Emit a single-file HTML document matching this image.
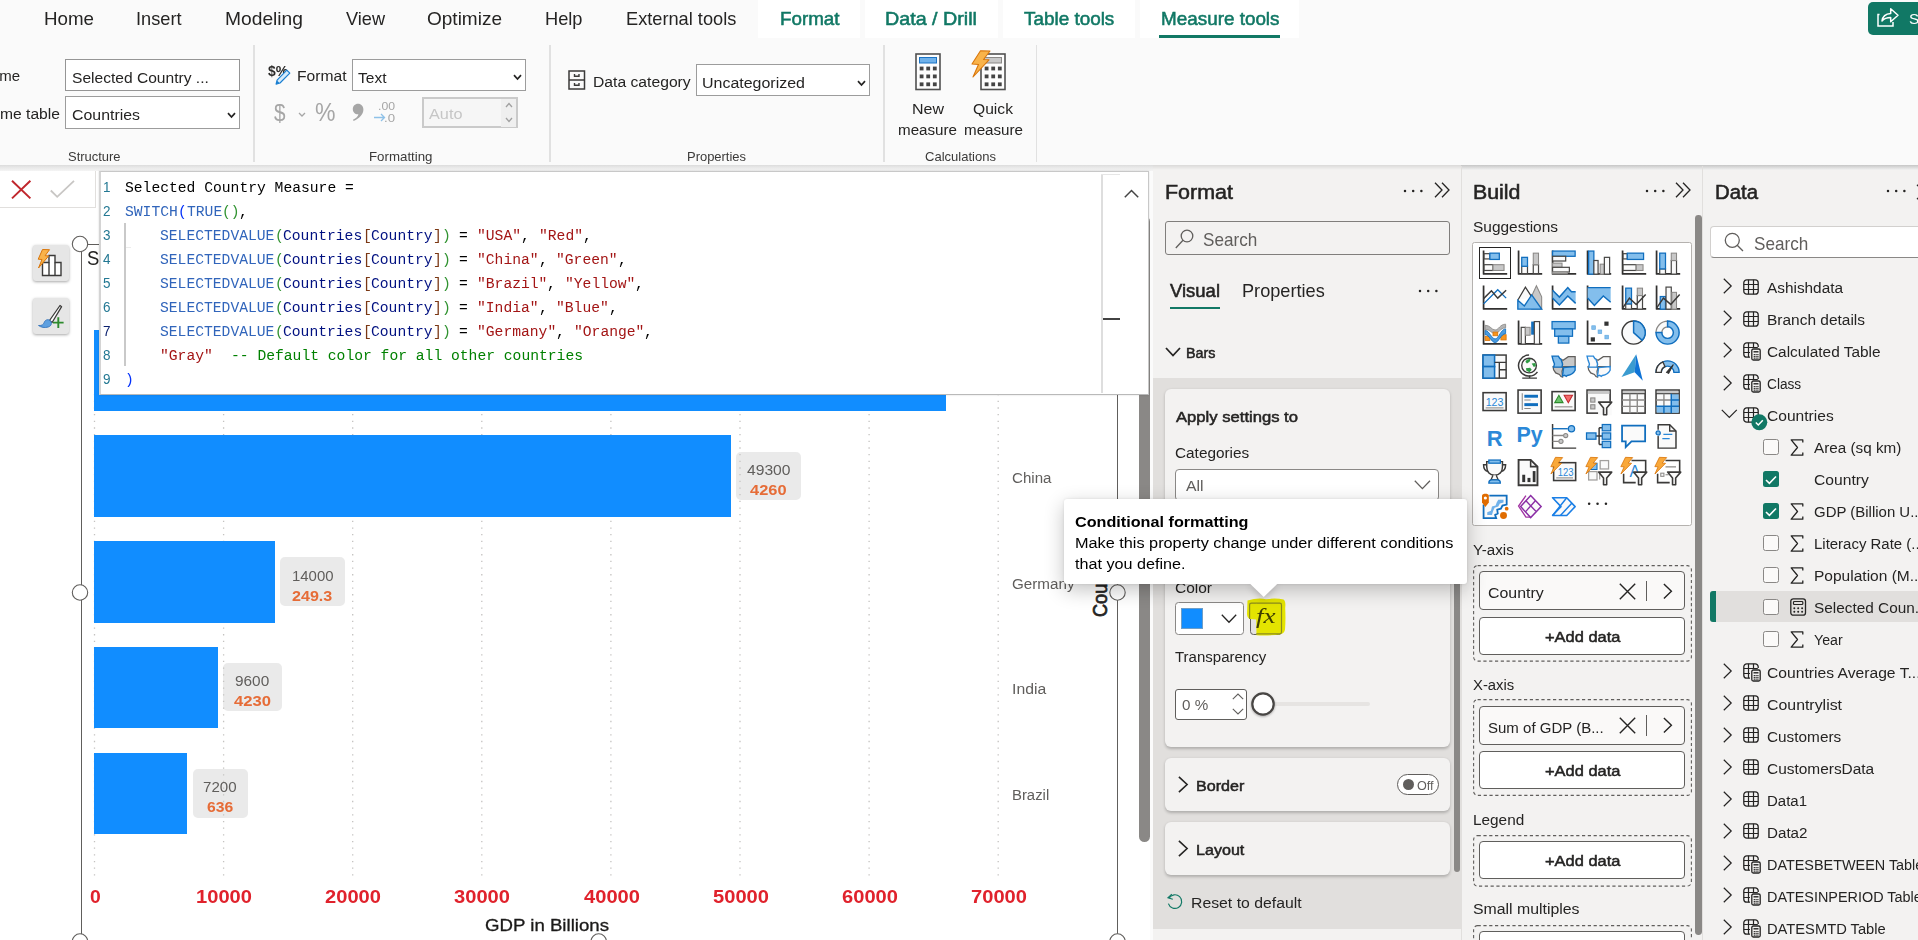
<!DOCTYPE html>
<html lang="en">
<head>
<meta charset="utf-8">
<title>Power BI Desktop - Conditional formatting</title>
<style>
html,body{margin:0;padding:0;}
body{width:1918px;height:940px;overflow:hidden;position:relative;background:#fff;
font-family:"Liberation Sans",sans-serif;color:#252423;}
#app{position:absolute;left:0;top:0;width:1918px;height:940px;overflow:hidden;}
#app section{position:absolute;left:0;top:0;width:0;height:0;}
#app div,#app svg,#app span{position:absolute;box-sizing:border-box;}
#app svg{overflow:visible;}
.t{white-space:pre;transform-origin:0 0;}
</style>
</head>
<body>
<div id="app">

<section id="ribbon" aria-label="Ribbon - Measure tools">
<div style="left:0px;top:0px;width:1918px;height:165px;background:#fafafa;"></div>
<div style="left:757.5px;top:0px;width:102px;height:37.5px;background:#ffffff;"></div>
<div style="left:865px;top:0px;width:132.5px;height:37.5px;background:#ffffff;"></div>
<div style="left:1003px;top:0px;width:131.5px;height:37.5px;background:#ffffff;"></div>
<div style="left:1139.5px;top:0px;width:159px;height:37.5px;background:#ffffff;"></div>
<span class="t" style="left:44px;top:8px;font-size:18.5px;line-height:21px;color:#252423;transform:scaleX(1.0130);">Home</span>
<span class="t" style="left:136px;top:8px;font-size:18.5px;line-height:21px;color:#252423;transform:scaleX(0.9831);">Insert</span>
<span class="t" style="left:225px;top:8px;font-size:18.5px;line-height:21px;color:#252423;transform:scaleX(1.0389);">Modeling</span>
<span class="t" style="left:346px;top:8px;font-size:18.5px;line-height:21px;color:#252423;transform:scaleX(0.9807);">View</span>
<span class="t" style="left:427px;top:8px;font-size:18.5px;line-height:21px;color:#252423;transform:scaleX(1.0274);">Optimize</span>
<span class="t" style="left:544.5px;top:8px;font-size:18.5px;line-height:21px;color:#252423;transform:scaleX(0.9852);">Help</span>
<span class="t" style="left:625.7px;top:8px;font-size:18.5px;line-height:21px;color:#252423;transform:scaleX(0.9840);">External tools</span>
<span class="t" style="left:779.5px;top:8px;font-size:18.5px;line-height:21px;color:#117865;-webkit-text-stroke:.55px #117865;transform:scaleX(1.0155);">Format</span>
<span class="t" style="left:885px;top:8px;font-size:18.5px;line-height:21px;color:#117865;-webkit-text-stroke:.55px #117865;transform:scaleX(1.0653);">Data / Drill</span>
<span class="t" style="left:1023.7px;top:8px;font-size:18.5px;line-height:21px;color:#117865;-webkit-text-stroke:.55px #117865;transform:scaleX(1.0209);">Table tools</span>
<span class="t" style="left:1160.5px;top:8px;font-size:18.5px;line-height:21px;color:#117865;-webkit-text-stroke:.55px #117865;transform:scaleX(1.0198);">Measure tools</span>
<div style="left:1159px;top:34.5px;width:120.7px;height:3px;background:#117865;"></div>
<div style="left:1868px;top:2px;width:62px;height:32.5px;background:#117865;border-radius:5px;"></div>
<svg style="left:1877px;top:7px;" width="22" height="20" viewBox="0 0 22 20"><path d="M2.5 7.5H1v11.5h15v-4" fill="none" stroke="#fff" stroke-width="1.5"/><path d="M5 14c.6-4.600 3.600-7.400 8.700-7.600V1.800l7.300 6.500-7.300 6.500v-4.200C9.600 10.600 7 11.700 5 14z" fill="none" stroke="#fff" stroke-width="1.5" stroke-linejoin="round"/></svg>
<span class="t" style="left:1909.3px;top:10px;font-size:16px;line-height:17px;color:#fff;transform-origin:0 14px;transform:scale(0.9500,0.917);">Share</span>
<span class="t" style="left:-20.5px;top:67px;font-size:16px;line-height:17px;color:#252423;transform-origin:0 14px;transform:scale(0.9370,0.917);">Name</span>
<span class="t" style="left:-20.5px;top:105px;font-size:16px;line-height:17px;color:#252423;transform-origin:0 14px;transform:scale(0.9777,0.917);">Home table</span>
<div style="left:65px;top:59px;width:175.2px;height:32px;background:#fff;border:1.600px solid #959595;"></div>
<span class="t" style="left:71.8px;top:68px;font-size:16.5px;line-height:18px;color:#252423;transform-origin:0 15px;transform:scale(0.9440,0.917);">Selected Country ...</span>
<div style="left:65px;top:95.8px;width:175.2px;height:33px;background:#fff;border:1.600px solid #9c9c9c;"></div>
<span class="t" style="left:71.8px;top:105px;font-size:16.5px;line-height:18px;color:#252423;transform-origin:0 15px;transform:scale(0.9628,0.917);">Countries</span>
<svg style="left:227px;top:111.8px;" width="9" height="7" viewBox="0 0 9 7"><path d="M1 1.2l3.5 3.8L8 1.2" fill="none" stroke="#252423" stroke-width="1.7"/></svg>
<span class="t" style="left:67.5px;top:149px;font-size:13px;line-height:15px;color:#3b3a39;transform:scaleX(0.9953);">Structure</span>
<div style="left:253px;top:45px;width:1.5px;height:117px;background:#e1e1e1;"></div>
<span class="t" style="left:268.3px;top:62px;font-size:16px;line-height:17px;color:#2b2a29;font-weight:700;transform-origin:0 14px;transform:scale(0.8649,0.917);">$%</span>
<svg style="left:275.3px;top:69.3px;" width="16" height="16" viewBox="0 0 16 16"><path d="M11.800 1.200l3 3-9.800 9.800-3.900 1.100 1-4z" fill="#d6ebfb" stroke="#1a7fd1" stroke-width="1.200" stroke-linejoin="round"/><path d="M1.100 15.100l1.100-3.300 2.300 2.300z" fill="#1a7fd1"/></svg>
<span class="t" style="left:297px;top:67px;font-size:16px;line-height:17px;color:#252423;transform-origin:0 14px;transform:scale(0.9769,0.917);">Format</span>
<div style="left:351.5px;top:59px;width:174.8px;height:32px;background:#fff;border:1.600px solid #9c9c9c;"></div>
<span class="t" style="left:358.3px;top:68px;font-size:16.5px;line-height:18px;color:#252423;transform-origin:0 15px;transform:scale(0.9417,0.917);">Text</span>
<svg style="left:513.3px;top:73.8px;" width="9" height="7" viewBox="0 0 9 7"><path d="M1 1.2l3.5 3.8L8 1.2" fill="none" stroke="#252423" stroke-width="1.7"/></svg>
<span class="t" style="left:274px;top:99px;font-size:24px;line-height:27px;color:#a6a6a6;transform:scaleX(0.8608);">$</span>
<svg style="left:297.5px;top:112px;" width="8" height="6" viewBox="0 0 8 6"><path d="M1 1l3 3 3-3" fill="none" stroke="#a6a6a6" stroke-width="1.3"/></svg>
<span class="t" style="left:314.5px;top:98px;font-size:25px;line-height:28px;color:#a6a6a6;transform:scaleX(0.9220);">%</span>
<svg style="left:352px;top:103.2px;" width="12" height="19" viewBox="0 0 12 19"><path d="M6 .8C9.200 .8 11.400 3.200 11.400 6.600 11.400 11.500 7.500 15.500 1.600 18L1 16.800C4.200 15 6 13.200 6.400 11.200 3.200 11.500 .8 9.200 .8 6.200 .8 3.200 3 .8 6 .8Z" fill="#a6a6a6"/></svg>
<span class="t" style="left:378px;top:100px;font-size:11.5px;line-height:12px;color:#a6a6a6;transform:scaleX(1.0625);">.00</span>
<span class="t" style="left:384px;top:112px;font-size:11.5px;line-height:12px;color:#a6a6a6;transform:scaleX(1.1466);">.0</span>
<svg style="left:373.5px;top:113px;" width="13" height="9" viewBox="0 0 13 9"><path d="M0 4.5h10M7 1l3.5 3.5L7 8" fill="none" stroke="#8ec1e8" stroke-width="1.3"/></svg>
<div style="left:422.2px;top:97.3px;width:95.6px;height:31.2px;background:#f6f6f6;border:2px solid #cacaca;"></div>
<div style="left:500.5px;top:99px;width:15.5px;height:27.5px;background:#efefef;"></div>
<span class="t" style="left:428.5px;top:104px;font-size:16.5px;line-height:18px;color:#c6c6c6;transform-origin:0 15px;transform:scale(0.9867,0.917);">Auto</span>
<svg style="left:504.5px;top:102px;" width="8" height="6" viewBox="0 0 8 6"><path d="M1 5l3-3.4L7 5" fill="none" stroke="#a0a0a0" stroke-width="1.3"/></svg>
<svg style="left:504.5px;top:117px;" width="8" height="6" viewBox="0 0 8 6"><path d="M1 1l3 3.4L7 1" fill="none" stroke="#a0a0a0" stroke-width="1.3"/></svg>
<span class="t" style="left:369px;top:149px;font-size:13px;line-height:15px;color:#3b3a39;transform:scaleX(1.0219);">Formatting</span>
<div style="left:549px;top:45px;width:1.5px;height:117px;background:#e1e1e1;"></div>
<svg style="left:567.5px;top:69.5px;" width="18" height="20" viewBox="0 0 18 20"><rect x="1" y="1" width="15.5" height="18" fill="none" stroke="#3b3a39" stroke-width="1.5"/><path d="M1 10h15.5M6.5 4v2.3h4.5V4M6.5 13v2.3h4.5V13" fill="none" stroke="#3b3a39" stroke-width="1.4"/></svg>
<span class="t" style="left:593px;top:73px;font-size:16px;line-height:17px;color:#252423;transform-origin:0 14px;transform:scale(0.9808,0.917);">Data category</span>
<div style="left:695.5px;top:64.3px;width:174.8px;height:32px;background:#fff;border:1.600px solid #9c9c9c;"></div>
<span class="t" style="left:702.3px;top:73px;font-size:16.5px;line-height:18px;color:#252423;transform-origin:0 15px;transform:scale(0.9680,0.917);">Uncategorized</span>
<svg style="left:857.3px;top:79.5px;" width="9" height="7" viewBox="0 0 9 7"><path d="M1 1.2l3.5 3.8L8 1.2" fill="none" stroke="#252423" stroke-width="1.7"/></svg>
<span class="t" style="left:687px;top:149px;font-size:13px;line-height:15px;color:#3b3a39;transform:scaleX(0.9958);">Properties</span>
<div style="left:883px;top:45px;width:1.5px;height:117px;background:#e1e1e1;"></div>
<svg style="left:914.5px;top:53px;" width="26" height="38" viewBox="0 0 26 38"><rect x="1" y="1" width="24" height="35.500" fill="#fdfdfd" stroke="#505050" stroke-width="1.600"/><rect x="4.500" y="4.500" width="17" height="5.500" fill="#6fb1ea" stroke="#1b73c4" stroke-width="1"/><rect x="4.7" y="13.6" width="3.800" height="3.800" fill="#444"/><rect x="11.3" y="13.6" width="3.800" height="3.800" fill="#444"/><rect x="17.9" y="13.6" width="3.800" height="3.800" fill="#444"/><rect x="4.7" y="21.5" width="3.800" height="3.800" fill="#444"/><rect x="11.3" y="21.5" width="3.800" height="3.800" fill="#444"/><rect x="17.9" y="21.5" width="3.800" height="3.800" fill="#444"/><rect x="4.7" y="29.4" width="3.800" height="3.800" fill="#444"/><rect x="11.3" y="29.4" width="3.800" height="3.800" fill="#444"/><rect x="17.9" y="29.4" width="3.800" height="3.800" fill="#444"/></svg>
<span class="t" style="left:912px;top:100px;font-size:16px;line-height:17px;color:#252423;transform-origin:0 14px;transform:scale(0.9995,0.917);">New</span>
<span class="t" style="left:898px;top:121px;font-size:16px;line-height:17px;color:#252423;transform-origin:0 14px;transform:scale(0.9478,0.917);">measure</span>
<svg style="left:980px;top:53px;" width="26" height="38" viewBox="0 0 26 38"><rect x="1" y="1" width="24" height="35.500" fill="#fdfdfd" stroke="#505050" stroke-width="1.600"/><rect x="4.500" y="4.500" width="17" height="5.500" fill="#c8c8c8" stroke="#8a8886" stroke-width="1"/><rect x="4.7" y="13.6" width="3.800" height="3.800" fill="#444"/><rect x="11.3" y="13.6" width="3.800" height="3.800" fill="#444"/><rect x="17.9" y="13.6" width="3.800" height="3.800" fill="#444"/><rect x="4.7" y="21.5" width="3.800" height="3.800" fill="#444"/><rect x="11.3" y="21.5" width="3.800" height="3.800" fill="#444"/><rect x="17.9" y="21.5" width="3.800" height="3.800" fill="#444"/><rect x="4.7" y="29.4" width="3.800" height="3.800" fill="#444"/><rect x="11.3" y="29.4" width="3.800" height="3.800" fill="#444"/><rect x="17.9" y="29.4" width="3.800" height="3.800" fill="#444"/></svg>
<svg style="left:970.5px;top:49.5px;" width="22" height="28" viewBox="0 0 22 28"><path d="M9.5 .8L19 1 12.5 9.5l5.5.3L2 27l5.5-12.5L1 14z" fill="#f9b34a" stroke="#d9760b" stroke-width="1.1" stroke-linejoin="round"/></svg>
<span class="t" style="left:973px;top:100px;font-size:16px;line-height:17px;color:#252423;transform-origin:0 14px;transform:scale(0.9778,0.917);">Quick</span>
<span class="t" style="left:963.5px;top:121px;font-size:16px;line-height:17px;color:#252423;transform-origin:0 14px;transform:scale(0.9478,0.917);">measure</span>
<span class="t" style="left:924.5px;top:149px;font-size:13px;line-height:15px;color:#3b3a39;transform:scaleX(1.0024);">Calculations</span>
<div style="left:1035.9px;top:45px;width:1.5px;height:117px;background:#e1e1e1;"></div>
<div style="left:0px;top:164.7px;width:1918px;height:6.3px;background:linear-gradient(#dcdcdc,#e9e9e9 45%,#f4f4f4);"></div>
</section>

<section id="canvas" aria-label="Report canvas and DAX formula bar">
<div style="left:0px;top:171px;width:1152.5px;height:769px;background:#fff;"></div>
<div style="left:81px;top:244px;width:1.2px;height:696px;background:#605e5c;"></div>
<div style="left:1117px;top:395px;width:1.2px;height:545px;background:#605e5c;"></div>
<div style="left:81px;top:243.6px;width:1037px;height:1.2px;background:#605e5c;"></div>
<svg style="left:0px;top:0px;" width="1152" height="940" viewBox="0 0 1152 940"><g stroke="#c4c2c0" stroke-width="1.300" stroke-dasharray="1.300 5.370"><line x1="94.5" y1="394" x2="94.5" y2="879" /><line x1="223.6" y1="394" x2="223.6" y2="879" /><line x1="352.7" y1="394" x2="352.7" y2="879" /><line x1="481.8" y1="394" x2="481.8" y2="879" /><line x1="610.9" y1="394" x2="610.9" y2="879" /><line x1="740" y1="394" x2="740" y2="879" /><line x1="869.1" y1="394" x2="869.1" y2="879" /><line x1="998.2" y1="394" x2="998.2" y2="879" /></g></svg>
<span class="t" style="left:87.3px;top:246px;font-size:20.5px;line-height:23px;color:#252423;transform:scaleX(0.9000);">Selected Country GDP by Country</span>
<div style="left:94px;top:330px;width:852px;height:80.7px;background:#118dff;"></div>
<div style="left:94px;top:435px;width:636.7px;height:81.7px;background:#118dff;"></div>
<div style="left:94px;top:541px;width:180.8px;height:81.5px;background:#118dff;"></div>
<div style="left:94px;top:646.7px;width:123.8px;height:81.3px;background:#118dff;"></div>
<div style="left:94px;top:752.5px;width:92.8px;height:81.2px;background:#118dff;"></div>
<div style="left:736px;top:451.8px;width:64.7px;height:48.7px;background:rgba(200,200,200,0.38);border-radius:5px;"></div>
<span class="t" style="left:746.5px;top:461px;font-size:16px;line-height:17px;color:#605e5c;transform-origin:0 14px;transform:scale(0.9775,0.917);">49300</span>
<span class="t" style="left:749.5px;top:481px;font-size:16px;line-height:17px;color:#e66c37;font-weight:700;transform-origin:0 14px;transform:scale(1.0255,0.917);">4260</span>
<div style="left:280px;top:557.3px;width:64.9px;height:48.7px;background:rgba(200,200,200,0.38);border-radius:5px;"></div>
<span class="t" style="left:291.7px;top:567px;font-size:16px;line-height:17px;color:#605e5c;transform-origin:0 14px;transform:scale(0.9326,0.917);">14000</span>
<span class="t" style="left:291.7px;top:587px;font-size:16px;line-height:17px;color:#e66c37;font-weight:700;transform-origin:0 14px;transform:scale(1.0063,0.917);">249.3</span>
<div style="left:223.2px;top:662.8px;width:58.7px;height:48.7px;background:rgba(200,200,200,0.38);border-radius:5px;"></div>
<span class="t" style="left:235px;top:672px;font-size:16px;line-height:17px;color:#605e5c;transform-origin:0 14px;transform:scale(0.9608,0.917);">9600</span>
<span class="t" style="left:233.5px;top:692px;font-size:16px;line-height:17px;color:#e66c37;font-weight:700;transform-origin:0 14px;transform:scale(1.0395,0.917);">4230</span>
<div style="left:192.5px;top:769.3px;width:55.7px;height:48.7px;background:rgba(200,200,200,0.38);border-radius:5px;"></div>
<span class="t" style="left:203.2px;top:778px;font-size:16px;line-height:17px;color:#605e5c;transform-origin:0 14px;transform:scale(0.9412,0.917);">7200</span>
<span class="t" style="left:207px;top:798px;font-size:16px;line-height:17px;color:#e66c37;font-weight:700;transform-origin:0 14px;transform:scale(0.9812,0.917);">636</span>
<span class="t" style="left:1012px;top:469px;font-size:16px;line-height:17px;color:#605e5c;transform-origin:0 14px;transform:scale(0.9447,0.917);">China</span>
<span class="t" style="left:1012px;top:575px;font-size:16px;line-height:17px;color:#605e5c;transform-origin:0 14px;transform:scale(0.9499,0.917);">Germany</span>
<span class="t" style="left:1012px;top:680px;font-size:16px;line-height:17px;color:#605e5c;transform-origin:0 14px;transform:scale(0.9855,0.917);">India</span>
<span class="t" style="left:1012px;top:786px;font-size:16px;line-height:17px;color:#605e5c;transform-origin:0 14px;transform:scale(0.9296,0.917);">Brazil</span>
<span class="t" style="left:1089.2px;top:617px;font-size:19.5px;line-height:23px;-webkit-text-stroke:.7px #252423;color:#252423;transform-origin:0 0;transform:rotate(-90deg) scaleX(0.93);">Country</span>
<span class="t" style="left:89.5px;top:885px;font-size:19.5px;line-height:22px;color:#e0222c;font-weight:700;transform-origin:0 18px;transform:scale(0.9945,0.940);">0</span>
<span class="t" style="left:196.2px;top:885px;font-size:19.5px;line-height:22px;color:#e0222c;font-weight:700;transform-origin:0 18px;transform:scale(1.0326,0.940);">10000</span>
<span class="t" style="left:325.3px;top:885px;font-size:19.5px;line-height:22px;color:#e0222c;font-weight:700;transform-origin:0 18px;transform:scale(1.0326,0.940);">20000</span>
<span class="t" style="left:454.4px;top:885px;font-size:19.5px;line-height:22px;color:#e0222c;font-weight:700;transform-origin:0 18px;transform:scale(1.0326,0.940);">30000</span>
<span class="t" style="left:583.5px;top:885px;font-size:19.5px;line-height:22px;color:#e0222c;font-weight:700;transform-origin:0 18px;transform:scale(1.0326,0.940);">40000</span>
<span class="t" style="left:712.6px;top:885px;font-size:19.5px;line-height:22px;color:#e0222c;font-weight:700;transform-origin:0 18px;transform:scale(1.0326,0.940);">50000</span>
<span class="t" style="left:841.7px;top:885px;font-size:19.5px;line-height:22px;color:#e0222c;font-weight:700;transform-origin:0 18px;transform:scale(1.0326,0.940);">60000</span>
<span class="t" style="left:970.8px;top:885px;font-size:19.5px;line-height:22px;color:#e0222c;font-weight:700;transform-origin:0 18px;transform:scale(1.0326,0.940);">70000</span>
<span class="t" style="left:485px;top:917px;font-size:16px;line-height:17px;color:#1b1a19;-webkit-text-stroke:.3px #1b1a19;transform:scaleX(1.1652);">GDP in Billions</span>
<svg style="left:0px;top:0px;" width="1152" height="940" viewBox="0 0 1152 940"><g fill="#fff" stroke="#605e5c" stroke-width="1.1"><circle cx="80" cy="244" r="7.7" /><circle cx="80" cy="592.5" r="7.7" /><circle cx="1117.5" cy="592.5" r="7.7" /><circle cx="80" cy="941.5" r="7.7" /><circle cx="598.7" cy="941.5" r="7.7" /><circle cx="1117.5" cy="941.5" r="7.7" /></g></svg>
<div style="left:32.5px;top:244.5px;width:36.5px;height:36.2px;background:#e6e6e6;border-radius:3px;box-shadow:0 1px 3px rgba(0,0,0,.35);"></div>
<div style="left:32.5px;top:297.5px;width:36.5px;height:36.5px;background:#e6e6e6;border-radius:3px;box-shadow:0 1px 3px rgba(0,0,0,.35);"></div>
<svg style="left:37px;top:248px;" width="28" height="30" viewBox="0 0 28 30"><path d="M5.5 27.5V14.5h6.5V7.5h6v7h6v13z" fill="#fff" stroke="#3b3a39" stroke-width="1.4"/><path d="M12 14.5v13M18 14.5v13" stroke="#3b3a39" stroke-width="1.4"/><path d="M5.5 1.5l7 .2-4.4 6 3.6.2L1.500 20l3.500-8.500-3.800-.3z" fill="#f9b34a" stroke="#d9760b" stroke-width="1" stroke-linejoin="round"/></svg>
<svg style="left:37px;top:302px;" width="28" height="28" viewBox="0 0 28 28"><path d="M12.500 18.500L23 3.500l1.600 1.200-9.500 15.800z" fill="#fff" stroke="#3b3a39" stroke-width="1.3" stroke-linejoin="round"/><path d="M1.500 23.500c3.500.3 5-1 5.800-3.300 1-2.700 4.200-3.300 6-1.500 2 2 1.200 5.300-2 6.300-3.600 1.100-7.300.4-9.800-1.500z" fill="#5ea0e0" stroke="#2b6cb8" stroke-width=".8"/><path d="M21.300 15.300v10.600M16 20.600h10.600" stroke="#2e8b2e" stroke-width="1.900"/></svg>
<div style="left:1139px;top:216px;width:11.4px;height:626px;background:#8a8886;border-radius:5.5px;"></div>
<div style="left:0px;top:171px;width:96px;height:36.5px;background:#fff;border-right:1.5px solid #e1dfdd;border-bottom:1.5px solid #e1dfdd;"></div>
<svg style="left:10.5px;top:180px;" width="20" height="19" viewBox="0 0 20 19"><path d="M1 .8l18.400 17.600M19.400 .8L1 18.400" stroke="#c0272d" stroke-width="2" fill="none"/></svg>
<svg style="left:50px;top:180px;" width="25" height="18" viewBox="0 0 25 18"><path d="M.8 10.500l6.400 6.300L24 .8" stroke="#c8c6c4" stroke-width="1.800" fill="none"/></svg>
<div style="left:99.3px;top:170.5px;width:1049.7px;height:224.7px;background:#fff;border:1.3px solid #c8c8c8;border-left:2.400px solid #d4d4d4;border-bottom:1.800px solid #b9b9b9;box-shadow:0 0 2px rgba(0,0,0,.15);"></div>
<div style="left:1100.8px;top:174px;width:2px;height:219px;background:#dedede;"></div>
<div style="left:1100.8px;top:174px;width:19px;height:1.2px;background:#e6e6e6;"></div>
<div style="left:1102.5px;top:317.7px;width:17px;height:2.1px;background:#424242;"></div>
<svg style="left:1123.5px;top:189px;" width="15" height="9" viewBox="0 0 15 9"><path d="M.8 8.200l6.700-6.700 6.700 6.700" stroke="#444" stroke-width="1.500" fill="none"/></svg>
<div style="left:124.4px;top:223px;width:1.6px;height:143px;background:#c9c9c9;"></div>
<div style="left:125.8px;top:247.2px;width:5.7px;height:0.8px;background:#ececec;"></div>
<div style="left:125.8px;top:271.2px;width:5.7px;height:-23.2px;background:#ececec;"></div>
<div style="left:125.8px;top:295.2px;width:5.7px;height:-47.2px;background:#ececec;"></div>
<div style="left:125.8px;top:319.2px;width:5.7px;height:-71.2px;background:#ececec;"></div>
<div style="left:125.8px;top:343.2px;width:5.7px;height:-95.2px;background:#ececec;"></div>
<span class="t" style="left:103px;top:178px;font-size:15.5px;line-height:17px;color:#237893;transform:scaleX(0.8696);">1</span>
<span class="t" style="left:124.9px;top:179px;font-size:15.2px;line-height:18px;color:#000000;font-family:'Liberation Mono', monospace;transform:scaleX(0.9655);">Selected Country Measure =</span>
<span class="t" style="left:103px;top:202px;font-size:15.5px;line-height:17px;color:#237893;transform:scaleX(0.8696);">2</span>
<span class="t" style="left:124.9px;top:203px;font-size:15.2px;line-height:18px;color:#3165bb;font-family:'Liberation Mono', monospace;transform:scaleX(0.9655);">SWITCH</span>
<span class="t" style="left:177.7px;top:203px;font-size:15.2px;line-height:18px;color:#0431fa;font-family:'Liberation Mono', monospace;transform:scaleX(0.9644);">(</span>
<span class="t" style="left:186.5px;top:203px;font-size:15.2px;line-height:18px;color:#3165bb;font-family:'Liberation Mono', monospace;transform:scaleX(0.9652);">TRUE</span>
<span class="t" style="left:221.7px;top:203px;font-size:15.2px;line-height:18px;color:#319331;font-family:'Liberation Mono', monospace;transform:scaleX(0.9652);">()</span>
<span class="t" style="left:239.3px;top:203px;font-size:15.2px;line-height:18px;color:#000000;font-family:'Liberation Mono', monospace;transform:scaleX(0.9644);">,</span>
<span class="t" style="left:103px;top:226px;font-size:15.5px;line-height:17px;color:#237893;transform:scaleX(0.8696);">3</span>
<span class="t" style="left:160.1px;top:227px;font-size:15.2px;line-height:18px;color:#3165bb;font-family:'Liberation Mono', monospace;transform:scaleX(0.9655);">SELECTEDVALUE</span>
<span class="t" style="left:274.5px;top:227px;font-size:15.2px;line-height:18px;color:#319331;font-family:'Liberation Mono', monospace;transform:scaleX(0.9644);">(</span>
<span class="t" style="left:283.3px;top:227px;font-size:15.2px;line-height:18px;color:#001080;font-family:'Liberation Mono', monospace;transform:scaleX(0.9655);">Countries</span>
<span class="t" style="left:362.5px;top:227px;font-size:15.2px;line-height:18px;color:#7b3814;font-family:'Liberation Mono', monospace;transform:scaleX(0.9644);">[</span>
<span class="t" style="left:371.3px;top:227px;font-size:15.2px;line-height:18px;color:#001080;font-family:'Liberation Mono', monospace;transform:scaleX(0.9653);">Country</span>
<span class="t" style="left:432.9px;top:227px;font-size:15.2px;line-height:18px;color:#7b3814;font-family:'Liberation Mono', monospace;transform:scaleX(0.9644);">]</span>
<span class="t" style="left:441.7px;top:227px;font-size:15.2px;line-height:18px;color:#319331;font-family:'Liberation Mono', monospace;transform:scaleX(0.9644);">)</span>
<span class="t" style="left:459.3px;top:227px;font-size:15.2px;line-height:18px;color:#000000;font-family:'Liberation Mono', monospace;transform:scaleX(0.9644);">=</span>
<span class="t" style="left:476.9px;top:227px;font-size:15.2px;line-height:18px;color:#a31515;font-family:'Liberation Mono', monospace;transform:scaleX(0.9654);">"USA"</span>
<span class="t" style="left:520.9px;top:227px;font-size:15.2px;line-height:18px;color:#000000;font-family:'Liberation Mono', monospace;transform:scaleX(0.9644);">,</span>
<span class="t" style="left:538.5px;top:227px;font-size:15.2px;line-height:18px;color:#a31515;font-family:'Liberation Mono', monospace;transform:scaleX(0.9654);">"Red"</span>
<span class="t" style="left:582.5px;top:227px;font-size:15.2px;line-height:18px;color:#000000;font-family:'Liberation Mono', monospace;transform:scaleX(0.9644);">,</span>
<span class="t" style="left:103px;top:250px;font-size:15.5px;line-height:17px;color:#237893;transform:scaleX(0.8696);">4</span>
<span class="t" style="left:160.1px;top:251px;font-size:15.2px;line-height:18px;color:#3165bb;font-family:'Liberation Mono', monospace;transform:scaleX(0.9655);">SELECTEDVALUE</span>
<span class="t" style="left:274.5px;top:251px;font-size:15.2px;line-height:18px;color:#319331;font-family:'Liberation Mono', monospace;transform:scaleX(0.9644);">(</span>
<span class="t" style="left:283.3px;top:251px;font-size:15.2px;line-height:18px;color:#001080;font-family:'Liberation Mono', monospace;transform:scaleX(0.9655);">Countries</span>
<span class="t" style="left:362.5px;top:251px;font-size:15.2px;line-height:18px;color:#7b3814;font-family:'Liberation Mono', monospace;transform:scaleX(0.9644);">[</span>
<span class="t" style="left:371.3px;top:251px;font-size:15.2px;line-height:18px;color:#001080;font-family:'Liberation Mono', monospace;transform:scaleX(0.9653);">Country</span>
<span class="t" style="left:432.9px;top:251px;font-size:15.2px;line-height:18px;color:#7b3814;font-family:'Liberation Mono', monospace;transform:scaleX(0.9644);">]</span>
<span class="t" style="left:441.7px;top:251px;font-size:15.2px;line-height:18px;color:#319331;font-family:'Liberation Mono', monospace;transform:scaleX(0.9644);">)</span>
<span class="t" style="left:459.3px;top:251px;font-size:15.2px;line-height:18px;color:#000000;font-family:'Liberation Mono', monospace;transform:scaleX(0.9644);">=</span>
<span class="t" style="left:476.9px;top:251px;font-size:15.2px;line-height:18px;color:#a31515;font-family:'Liberation Mono', monospace;transform:scaleX(0.9653);">"China"</span>
<span class="t" style="left:538.5px;top:251px;font-size:15.2px;line-height:18px;color:#000000;font-family:'Liberation Mono', monospace;transform:scaleX(0.9644);">,</span>
<span class="t" style="left:556.1px;top:251px;font-size:15.2px;line-height:18px;color:#a31515;font-family:'Liberation Mono', monospace;transform:scaleX(0.9653);">"Green"</span>
<span class="t" style="left:617.7px;top:251px;font-size:15.2px;line-height:18px;color:#000000;font-family:'Liberation Mono', monospace;transform:scaleX(0.9644);">,</span>
<span class="t" style="left:103px;top:274px;font-size:15.5px;line-height:17px;color:#237893;transform:scaleX(0.8696);">5</span>
<span class="t" style="left:160.1px;top:275px;font-size:15.2px;line-height:18px;color:#3165bb;font-family:'Liberation Mono', monospace;transform:scaleX(0.9655);">SELECTEDVALUE</span>
<span class="t" style="left:274.5px;top:275px;font-size:15.2px;line-height:18px;color:#319331;font-family:'Liberation Mono', monospace;transform:scaleX(0.9644);">(</span>
<span class="t" style="left:283.3px;top:275px;font-size:15.2px;line-height:18px;color:#001080;font-family:'Liberation Mono', monospace;transform:scaleX(0.9655);">Countries</span>
<span class="t" style="left:362.5px;top:275px;font-size:15.2px;line-height:18px;color:#7b3814;font-family:'Liberation Mono', monospace;transform:scaleX(0.9644);">[</span>
<span class="t" style="left:371.3px;top:275px;font-size:15.2px;line-height:18px;color:#001080;font-family:'Liberation Mono', monospace;transform:scaleX(0.9653);">Country</span>
<span class="t" style="left:432.9px;top:275px;font-size:15.2px;line-height:18px;color:#7b3814;font-family:'Liberation Mono', monospace;transform:scaleX(0.9644);">]</span>
<span class="t" style="left:441.7px;top:275px;font-size:15.2px;line-height:18px;color:#319331;font-family:'Liberation Mono', monospace;transform:scaleX(0.9644);">)</span>
<span class="t" style="left:459.3px;top:275px;font-size:15.2px;line-height:18px;color:#000000;font-family:'Liberation Mono', monospace;transform:scaleX(0.9644);">=</span>
<span class="t" style="left:476.9px;top:275px;font-size:15.2px;line-height:18px;color:#a31515;font-family:'Liberation Mono', monospace;transform:scaleX(0.9654);">"Brazil"</span>
<span class="t" style="left:547.3px;top:275px;font-size:15.2px;line-height:18px;color:#000000;font-family:'Liberation Mono', monospace;transform:scaleX(0.9644);">,</span>
<span class="t" style="left:564.9px;top:275px;font-size:15.2px;line-height:18px;color:#a31515;font-family:'Liberation Mono', monospace;transform:scaleX(0.9654);">"Yellow"</span>
<span class="t" style="left:635.3px;top:275px;font-size:15.2px;line-height:18px;color:#000000;font-family:'Liberation Mono', monospace;transform:scaleX(0.9644);">,</span>
<span class="t" style="left:103px;top:298px;font-size:15.5px;line-height:17px;color:#237893;transform:scaleX(0.8696);">6</span>
<span class="t" style="left:160.1px;top:299px;font-size:15.2px;line-height:18px;color:#3165bb;font-family:'Liberation Mono', monospace;transform:scaleX(0.9655);">SELECTEDVALUE</span>
<span class="t" style="left:274.5px;top:299px;font-size:15.2px;line-height:18px;color:#319331;font-family:'Liberation Mono', monospace;transform:scaleX(0.9644);">(</span>
<span class="t" style="left:283.3px;top:299px;font-size:15.2px;line-height:18px;color:#001080;font-family:'Liberation Mono', monospace;transform:scaleX(0.9655);">Countries</span>
<span class="t" style="left:362.5px;top:299px;font-size:15.2px;line-height:18px;color:#7b3814;font-family:'Liberation Mono', monospace;transform:scaleX(0.9644);">[</span>
<span class="t" style="left:371.3px;top:299px;font-size:15.2px;line-height:18px;color:#001080;font-family:'Liberation Mono', monospace;transform:scaleX(0.9653);">Country</span>
<span class="t" style="left:432.9px;top:299px;font-size:15.2px;line-height:18px;color:#7b3814;font-family:'Liberation Mono', monospace;transform:scaleX(0.9644);">]</span>
<span class="t" style="left:441.7px;top:299px;font-size:15.2px;line-height:18px;color:#319331;font-family:'Liberation Mono', monospace;transform:scaleX(0.9644);">)</span>
<span class="t" style="left:459.3px;top:299px;font-size:15.2px;line-height:18px;color:#000000;font-family:'Liberation Mono', monospace;transform:scaleX(0.9644);">=</span>
<span class="t" style="left:476.9px;top:299px;font-size:15.2px;line-height:18px;color:#a31515;font-family:'Liberation Mono', monospace;transform:scaleX(0.9653);">"India"</span>
<span class="t" style="left:538.5px;top:299px;font-size:15.2px;line-height:18px;color:#000000;font-family:'Liberation Mono', monospace;transform:scaleX(0.9644);">,</span>
<span class="t" style="left:556.1px;top:299px;font-size:15.2px;line-height:18px;color:#a31515;font-family:'Liberation Mono', monospace;transform:scaleX(0.9655);">"Blue"</span>
<span class="t" style="left:608.9px;top:299px;font-size:15.2px;line-height:18px;color:#000000;font-family:'Liberation Mono', monospace;transform:scaleX(0.9644);">,</span>
<span class="t" style="left:103px;top:322px;font-size:15.5px;line-height:17px;color:#0b216f;transform:scaleX(0.8696);">7</span>
<span class="t" style="left:160.1px;top:323px;font-size:15.2px;line-height:18px;color:#3165bb;font-family:'Liberation Mono', monospace;transform:scaleX(0.9655);">SELECTEDVALUE</span>
<span class="t" style="left:274.5px;top:323px;font-size:15.2px;line-height:18px;color:#319331;font-family:'Liberation Mono', monospace;transform:scaleX(0.9644);">(</span>
<span class="t" style="left:283.3px;top:323px;font-size:15.2px;line-height:18px;color:#001080;font-family:'Liberation Mono', monospace;transform:scaleX(0.9655);">Countries</span>
<span class="t" style="left:362.5px;top:323px;font-size:15.2px;line-height:18px;color:#7b3814;font-family:'Liberation Mono', monospace;transform:scaleX(0.9644);">[</span>
<span class="t" style="left:371.3px;top:323px;font-size:15.2px;line-height:18px;color:#001080;font-family:'Liberation Mono', monospace;transform:scaleX(0.9653);">Country</span>
<span class="t" style="left:432.9px;top:323px;font-size:15.2px;line-height:18px;color:#7b3814;font-family:'Liberation Mono', monospace;transform:scaleX(0.9644);">]</span>
<span class="t" style="left:441.7px;top:323px;font-size:15.2px;line-height:18px;color:#319331;font-family:'Liberation Mono', monospace;transform:scaleX(0.9644);">)</span>
<span class="t" style="left:459.3px;top:323px;font-size:15.2px;line-height:18px;color:#000000;font-family:'Liberation Mono', monospace;transform:scaleX(0.9644);">=</span>
<span class="t" style="left:476.9px;top:323px;font-size:15.2px;line-height:18px;color:#a31515;font-family:'Liberation Mono', monospace;transform:scaleX(0.9655);">"Germany"</span>
<span class="t" style="left:556.1px;top:323px;font-size:15.2px;line-height:18px;color:#000000;font-family:'Liberation Mono', monospace;transform:scaleX(0.9644);">,</span>
<span class="t" style="left:573.7px;top:323px;font-size:15.2px;line-height:18px;color:#a31515;font-family:'Liberation Mono', monospace;transform:scaleX(0.9654);">"Orange"</span>
<span class="t" style="left:644.1px;top:323px;font-size:15.2px;line-height:18px;color:#000000;font-family:'Liberation Mono', monospace;transform:scaleX(0.9644);">,</span>
<span class="t" style="left:103px;top:346px;font-size:15.5px;line-height:17px;color:#237893;transform:scaleX(0.8696);">8</span>
<span class="t" style="left:160.1px;top:347px;font-size:15.2px;line-height:18px;color:#a31515;font-family:'Liberation Mono', monospace;transform:scaleX(0.9655);">"Gray"</span>
<span class="t" style="left:230.5px;top:347px;font-size:15.2px;line-height:18px;color:#008000;font-family:'Liberation Mono', monospace;transform:scaleX(0.9655);">-- Default color for all other countries</span>
<span class="t" style="left:103px;top:370px;font-size:15.5px;line-height:17px;color:#237893;transform:scaleX(0.8696);">9</span>
<span class="t" style="left:124.9px;top:371px;font-size:15.2px;line-height:18px;color:#0431fa;font-family:'Liberation Mono', monospace;transform:scaleX(0.9644);">)</span>
</section>

<section id="format" aria-label="Format pane">
<div style="left:1150.4px;top:171px;width:2.6px;height:769px;background:#fbfbfb;"></div>
<div style="left:1153px;top:165px;width:308px;height:775px;background:#f3f2f1;"></div>
<div style="left:1153px;top:165px;width:765px;height:5px;background:linear-gradient(rgba(0,0,0,.10),rgba(0,0,0,0));"></div>
<div style="left:1460.6px;top:166px;width:1px;height:774px;background:#e1dfdd;"></div>
<span class="t" style="left:1164.5px;top:180px;font-size:20.5px;line-height:23px;color:#252423;-webkit-text-stroke:.55px #252423;transform:scaleX(1.0472);">Format</span>
<svg style="left:1402.5px;top:188.5px;" width="22" height="4" viewBox="0 0 22 4"><g fill="#252423"><circle cx="2" cy="2" r="1.25"/><circle cx="10.2" cy="2" r="1.25"/><circle cx="18.4" cy="2" r="1.25"/></g></svg>
<svg style="left:1433.8px;top:182px;" width="16" height="16" viewBox="0 0 16 16"><path d="M1 .8l7 7.200-7 7.200M8 .8l7 7.200-7 7.200" fill="none" stroke="#252423" stroke-width="1.300"/></svg>
<div style="left:1164.5px;top:220.6px;width:285.5px;height:34.6px;border:1.4px solid #807e7c;border-radius:3px;"></div>
<svg style="left:1175px;top:228.5px;" width="19" height="20" viewBox="0 0 19 20"><circle cx="12" cy="7" r="5.800" fill="none" stroke="#605e5c" stroke-width="1.300"/><path d="M8 11.300L.8 19" stroke="#605e5c" stroke-width="1.300"/></svg>
<span class="t" style="left:1203px;top:229px;font-size:18.5px;line-height:21px;color:#605e5c;transform:scaleX(0.9245);">Search</span>
<span class="t" style="left:1169.5px;top:280px;font-size:18.5px;line-height:21px;color:#252423;-webkit-text-stroke:.55px #252423;transform:scaleX(0.9988);">Visual</span>
<div style="left:1169.5px;top:306.7px;width:50.5px;height:2.5px;background:#117865;"></div>
<span class="t" style="left:1241.7px;top:280px;font-size:18.5px;line-height:21px;color:#252423;transform:scaleX(0.9819);">Properties</span>
<svg style="left:1418px;top:289px;" width="22" height="4" viewBox="0 0 22 4"><g fill="#252423"><circle cx="2" cy="2" r="1.25"/><circle cx="10.2" cy="2" r="1.25"/><circle cx="18.4" cy="2" r="1.25"/></g></svg>
<svg style="left:1164.5px;top:346.5px;" width="16" height="10" viewBox="0 0 16 10"><path d="M1 1l7 7.500L15 1" fill="none" stroke="#252423" stroke-width="1.800"/></svg>
<span class="t" style="left:1186.2px;top:344px;font-size:16px;line-height:17px;color:#252423;-webkit-text-stroke:.55px #252423;transform-origin:0 14px;transform:scale(0.8965,0.917);">Bars</span>
<div style="left:1153px;top:378.3px;width:307.6px;height:551px;background:#e1dfdd;"></div>
<div style="left:1164.5px;top:389px;width:285.5px;height:357.6px;background:#f3f2f1;border-radius:6px;box-shadow:0 1.500px 3px rgba(0,0,0,.22);"></div>
<span class="t" style="left:1175.5px;top:408px;font-size:16px;line-height:17px;color:#252423;-webkit-text-stroke:.55px #252423;transform-origin:0 14px;transform:scale(1.0391,0.917);">Apply settings to</span>
<span class="t" style="left:1175px;top:444px;font-size:16px;line-height:17px;color:#252423;transform-origin:0 14px;transform:scale(0.9590,0.917);">Categories</span>
<div style="left:1175px;top:469.3px;width:263.7px;height:32.2px;background:#fff;border:1.3px solid #8a8886;border-radius:4px;"></div>
<span class="t" style="left:1186.2px;top:477px;font-size:16px;line-height:17px;color:#605e5c;transform-origin:0 14px;transform:scale(0.9842,0.917);">All</span>
<svg style="left:1413.5px;top:480px;" width="17" height="10" viewBox="0 0 17 10"><path d="M.8 .8l7.600 7.800L16 .8" fill="none" stroke="#605e5c" stroke-width="1.300"/></svg>
<span class="t" style="left:1175px;top:579px;font-size:16px;line-height:17px;color:#252423;transform-origin:0 14px;transform:scale(0.9677,0.917);">Color</span>
<div style="left:1175px;top:602px;width:69.2px;height:33px;background:#fff;border:1.4px solid #8a8886;border-radius:3.5px;"></div>
<div style="left:1181.3px;top:608px;width:21.3px;height:21.2px;background:#118dff;border:1px solid #6e9ec8;"></div>
<svg style="left:1221px;top:614px;" width="17" height="10" viewBox="0 0 17 10"><path d="M.8 .8l7.200 7.400L15.200 .8" fill="none" stroke="#252423" stroke-width="1.300"/></svg>
<div style="left:1249.7px;top:602px;width:32.3px;height:33px;background:#e4e3e1;border:1.3px solid #605e5c;border-radius:3.5px;"></div>
<svg style="left:1244px;top:596px;" width="44" height="42" viewBox="0 0 44 42"><path d="M3.500 4.500Q14 1.500 22 3.200 32 1.800 39.500 3.500 42 5 41.200 12 41.800 24 41 33.500 40.500 37.500 36 38.200 26 40 12.500 39.300L12.200 23.500 6.500 23Q3.200 22.500 3 18z" fill="#e4e400"/><path d="M12.300 7.200h23.400a1.800 1.800 0 0 1 1.800 1.800v27a1.800 1.800 0 0 1-1.800 1.800H12.300" fill="none" stroke="#8c8c1c" stroke-width="1.200"/><path d="M5.600 23V9a1.800 1.800 0 0 1 1.800-1.800h5" fill="none" stroke="#8c8c1c" stroke-width="1.200"/></svg>
<span class="t" style="left:1256px;top:604px;font-size:21.5px;line-height:24px;color:#3d3d00;font-family:'Liberation Serif', serif;font-style:italic;transform:scaleX(1.2620);">fx</span>
<span class="t" style="left:1175px;top:648px;font-size:16px;line-height:17px;color:#252423;transform-origin:0 14px;transform:scale(0.9379,0.917);">Transparency</span>
<div style="left:1175px;top:688.5px;width:71.9px;height:31.3px;background:#fff;border:1.3px solid #605e5c;border-radius:3px;"></div>
<span class="t" style="left:1181.5px;top:696px;font-size:16px;line-height:17px;color:#605e5c;transform-origin:0 14px;transform:scale(0.9500,0.917);">0 %</span>
<svg style="left:1232px;top:693px;" width="12" height="7" viewBox="0 0 12 7"><path d="M.8 6.200l5.200-5.200 5.200 5.200" fill="none" stroke="#605e5c" stroke-width="1.100"/></svg>
<svg style="left:1232px;top:707.5px;" width="12" height="7" viewBox="0 0 12 7"><path d="M.8 .8l5.200 5.200 5.200-5.200" fill="none" stroke="#605e5c" stroke-width="1.100"/></svg>
<div style="left:1270px;top:702px;width:100px;height:4px;background:#e6e4e2;border-radius:2px;"></div>
<svg style="left:1250px;top:691px;filter:drop-shadow(0 1px 1px rgba(0,0,0,.3));" width="26" height="26" viewBox="0 0 26 26"><circle cx="13" cy="13" r="10.700" fill="#fff" stroke="#484644" stroke-width="2.200"/></svg>
<div style="left:1164.5px;top:758px;width:285.5px;height:52.5px;background:#f3f2f1;border-radius:6px;box-shadow:0 1.500px 3px rgba(0,0,0,.22);"></div>
<svg style="left:1178px;top:776px;" width="11" height="17" viewBox="0 0 11 17"><path d="M.9 .9l8.200 7.600L.9 16.100" fill="none" stroke="#252423" stroke-width="1.600"/></svg>
<span class="t" style="left:1196.2px;top:776px;font-size:16.5px;line-height:18px;color:#252423;-webkit-text-stroke:.55px #252423;transform-origin:0 15px;transform:scale(0.9751,0.917);">Border</span>
<div style="left:1396.5px;top:773.7px;width:42.7px;height:21.1px;background:#fff;border:1.2px solid #605e5c;border-radius:11px;"></div>
<div style="left:1402.5px;top:779px;width:11px;height:11px;background:#605e5c;border-radius:6px;"></div>
<span class="t" style="left:1416.8px;top:778px;font-size:13px;line-height:15px;color:#605e5c;transform:scaleX(0.9702);">Off</span>
<div style="left:1164.5px;top:822px;width:285.5px;height:52.5px;background:#f3f2f1;border-radius:6px;box-shadow:0 1.500px 3px rgba(0,0,0,.22);"></div>
<svg style="left:1178px;top:840px;" width="11" height="17" viewBox="0 0 11 17"><path d="M.9 .9l8.200 7.600L.9 16.100" fill="none" stroke="#252423" stroke-width="1.600"/></svg>
<span class="t" style="left:1196.2px;top:840px;font-size:16.5px;line-height:18px;color:#252423;-webkit-text-stroke:.55px #252423;transform-origin:0 15px;transform:scale(0.9748,0.917);">Layout</span>
<svg style="left:1166px;top:893.2px;" width="17" height="18" viewBox="0 0 17 18"><path d="M3 5.200A6.800 6.800 0 1 1 2.400 10.600" fill="none" stroke="#117865" stroke-width="1.150"/><path d="M5.800 1.200L2 4.800l4.800 1.500" fill="none" stroke="#117865" stroke-width="1.150"/></svg>
<span class="t" style="left:1191.4px;top:894px;font-size:16px;line-height:17px;color:#252423;transform-origin:0 14px;transform:scale(0.9868,0.917);">Reset to default</span>
<div style="left:1453.7px;top:540px;width:6.6px;height:332px;background:#8a8886;border-radius:3.3px;"></div>
</section>

<section id="build" aria-label="Build pane">
<div style="left:1461.6px;top:170px;width:240.9px;height:770px;background:#f3f2f1;"></div>
<span class="t" style="left:1473px;top:180px;font-size:20.5px;line-height:23px;color:#252423;-webkit-text-stroke:.55px #252423;transform:scaleX(1.0418);">Build</span>
<svg style="left:1644.5px;top:188.5px;" width="22" height="4" viewBox="0 0 22 4"><g fill="#252423"><circle cx="2" cy="2" r="1.25"/><circle cx="10.2" cy="2" r="1.25"/><circle cx="18.4" cy="2" r="1.25"/></g></svg>
<svg style="left:1674.8px;top:181.8px;" width="16" height="16" viewBox="0 0 16 16"><path d="M1 .8l7 7.200-7 7.200M8 .8l7 7.200-7 7.200" fill="none" stroke="#252423" stroke-width="1.300"/></svg>
<span class="t" style="left:1473px;top:218px;font-size:16px;line-height:17px;color:#252423;transform-origin:0 14px;transform:scale(0.9652,0.917);">Suggestions</span>
<div style="left:1472.3px;top:241.8px;width:219.4px;height:284.4px;background:#fff;border:1.500px solid #b5b2af;border-radius:2.5px;"></div>
<div style="left:1479px;top:247px;width:32px;height:32px;border:1.2px solid #252423;"></div>
<svg style="left:1482px;top:249.7px;" width="25.2" height="25.2" viewBox="0 0 24 24"><path d="M1.500 .5v22.500M.8 22.800H24" fill="none" stroke="#323130" stroke-width="1.650"/><rect x="2" y="3.5" width="5.5" height="5" fill="#fafafa" stroke="#484745" stroke-width="1.15"/><rect x="7.5" y="3" width="9" height="6" fill="#83beec" stroke="#106ebe" stroke-width="1.2"/><rect x="2" y="14" width="8.5" height="5.5" fill="#fafafa" stroke="#484745" stroke-width="1.15"/><rect x="10.5" y="14" width="10.5" height="5.5" fill="#c8c8c8" stroke="#8a8886" stroke-width="1"/></svg>
<svg style="left:1516.65px;top:249.7px;" width="25.2" height="25.2" viewBox="0 0 24 24"><path d="M1.500 .5v22.500M.8 22.800H24" fill="none" stroke="#323130" stroke-width="1.650"/><rect x="4.5" y="15.5" width="5.5" height="7" fill="#fafafa" stroke="#484745" stroke-width="1.15"/><rect x="4.5" y="7" width="5.5" height="8.5" fill="#83beec" stroke="#106ebe" stroke-width="1.2"/><rect x="15.5" y="14" width="5" height="8.5" fill="#fafafa" stroke="#484745" stroke-width="1.15"/><rect x="15.5" y="3" width="5" height="11" fill="#c8c8c8" stroke="#8a8886" stroke-width="1"/></svg>
<svg style="left:1551.3px;top:249.7px;" width="25.2" height="25.2" viewBox="0 0 24 24"><path d="M1.500 .5v22.500M.8 22.800H24" fill="none" stroke="#323130" stroke-width="1.650"/><rect x="1.5" y="1" width="21.5" height="5" fill="#83beec" stroke="#106ebe" stroke-width="1.2"/><rect x="1.5" y="6" width="12.5" height="4.5" fill="#fafafa" stroke="#484745" stroke-width="1.15"/><rect x="1.5" y="12.5" width="9" height="4" fill="#c8c8c8" stroke="#8a8886" stroke-width="1"/><rect x="1.5" y="16.5" width="16" height="4.5" fill="#fafafa" stroke="#484745" stroke-width="1.15"/><rect x="1.5" y="21" width="14" height="1.5" fill="#c8c8c8" stroke="#8a8886" stroke-width="1"/></svg>
<svg style="left:1585.95px;top:249.7px;" width="25.2" height="25.2" viewBox="0 0 24 24"><path d="M1.500 .5v22.500M.8 22.800H24" fill="none" stroke="#323130" stroke-width="1.650"/><rect x="2.5" y="1" width="5" height="22" fill="#83beec" stroke="#106ebe" stroke-width="1.2"/><rect x="7.5" y="10" width="4" height="13" fill="#fafafa" stroke="#484745" stroke-width="1.15"/><rect x="13.5" y="13.5" width="4" height="9.5" fill="#c8c8c8" stroke="#8a8886" stroke-width="1"/><rect x="17.5" y="7" width="5" height="16" fill="#fafafa" stroke="#484745" stroke-width="1.15"/></svg>
<svg style="left:1620.6px;top:249.7px;" width="25.2" height="25.2" viewBox="0 0 24 24"><path d="M1.500 .5v22.500M.8 22.800H24" fill="none" stroke="#323130" stroke-width="1.650"/><rect x="2" y="3.5" width="4" height="5" fill="#fafafa" stroke="#484745" stroke-width="1.15"/><rect x="6" y="3" width="15.5" height="6" fill="#83beec" stroke="#106ebe" stroke-width="1.2"/><rect x="2" y="14" width="12.5" height="5.5" fill="#fafafa" stroke="#484745" stroke-width="1.15"/><rect x="14.5" y="14" width="6.5" height="5.5" fill="#c8c8c8" stroke="#8a8886" stroke-width="1"/></svg>
<svg style="left:1655.25px;top:249.7px;" width="25.2" height="25.2" viewBox="0 0 24 24"><path d="M1.500 .5v22.500M.8 22.800H24" fill="none" stroke="#323130" stroke-width="1.650"/><rect x="4.5" y="18" width="5.5" height="5" fill="#fafafa" stroke="#484745" stroke-width="1.15"/><rect x="4.5" y="3" width="5.5" height="15" fill="#83beec" stroke="#106ebe" stroke-width="1.2"/><rect x="15.5" y="10" width="5" height="13" fill="#fafafa" stroke="#484745" stroke-width="1.15"/><rect x="15.5" y="3" width="5" height="7" fill="#c8c8c8" stroke="#8a8886" stroke-width="1"/></svg>
<svg style="left:1482px;top:284.6px;" width="25.2" height="25.2" viewBox="0 0 24 24"><path d="M1.500 .5v22.500M.8 22.800H24" fill="none" stroke="#323130" stroke-width="1.650"/><path d="M1.500 18L15 4.500l8 8" fill="none" stroke="#106ebe" stroke-width="1.3" /><path d="M1.500 13l7.500-7.500 6 7L23 5" fill="none" stroke="#3b3a39" stroke-width="1.4" /></svg>
<svg style="left:1516.65px;top:284.6px;" width="25.2" height="25.2" viewBox="0 0 24 24"><path d="M1 14L8 2l6.500 10" fill="#fafafa" stroke="#3b3a39" stroke-width="1.2" /><path d="M14 10.500L18.500 .8l5 10.500V23H14z" fill="#c8c8c8" stroke="#8a8886" stroke-width="1" /><path d="M.8 14.500L7 20l7-10.500L23.500 23H.8z" fill="#83beec" stroke="#106ebe" stroke-width="1.3" /></svg>
<svg style="left:1551.3px;top:284.6px;" width="25.2" height="25.2" viewBox="0 0 24 24"><path d="M1.500 .5v22.500M.8 22.800H24" fill="none" stroke="#323130" stroke-width="1.650"/><path d="M1.500 5L8 11.500l8-9 3.500 4h4v11L16 10.500 8 19l-6.500-6.500z" fill="#83beec" /><path d="M1.500 5L8 11.500l8-9 3.500 4h4M1.500 12.500L8 19l8-8.500 7.500 7" fill="none" stroke="#106ebe" stroke-width="1.4" /></svg>
<svg style="left:1585.95px;top:284.6px;" width="25.2" height="25.2" viewBox="0 0 24 24"><path d="M1.500 .5v22.500M.8 22.800H24" fill="none" stroke="#323130" stroke-width="1.650"/><path d="M1.500 2.500h22v14l-7-6L8 19.500l-6.500-7z" fill="#83beec" /><path d="M1.500 2.500h22M1.500 12.500L8 19.500l8.500-9 7 6" fill="none" stroke="#106ebe" stroke-width="1.4" /></svg>
<svg style="left:1620.6px;top:284.6px;" width="25.2" height="25.2" viewBox="0 0 24 24"><path d="M1.500 .5v22.500M.8 22.800H24" fill="none" stroke="#323130" stroke-width="1.650"/><rect x="4.5" y="18" width="5.5" height="5" fill="#fafafa" stroke="#484745" stroke-width="1.15"/><rect x="4.5" y="3" width="5.5" height="15" fill="#83beec" stroke="#106ebe" stroke-width="1.2"/><rect x="15.5" y="10" width="5" height="13" fill="#fafafa" stroke="#484745" stroke-width="1.15"/><rect x="15.5" y="3" width="5" height="7" fill="#c8c8c8" stroke="#8a8886" stroke-width="1"/><path d="M1.500 22L8 12.500l6.500 6 9-9.500" fill="none" stroke="#3b3a39" stroke-width="1.4" /></svg>
<svg style="left:1655.25px;top:284.6px;" width="25.2" height="25.2" viewBox="0 0 24 24"><path d="M1.500 .5v22.500M.8 22.800H24" fill="none" stroke="#323130" stroke-width="1.650"/><rect x="5" y="11" width="5" height="12" fill="#83beec" stroke="#106ebe" stroke-width="1.2"/><rect x="10.5" y="2" width="5" height="21" fill="#fafafa" stroke="#484745" stroke-width="1.15"/><rect x="16" y="7" width="4.5" height="16" fill="#c8c8c8" stroke="#8a8886" stroke-width="1"/><path d="M1.500 22L8 12.500l7 6L23.500 9" fill="none" stroke="#3b3a39" stroke-width="1.4" /></svg>
<svg style="left:1482px;top:319.5px;" width="25.2" height="25.2" viewBox="0 0 24 24"><path d="M1.500 .5v22.500M.8 22.800H24" fill="none" stroke="#323130" stroke-width="1.650"/><path d="M3 5C8 5 9 9.500 12.500 9.500S17 4 22.500 4v3.500C17 7.500 16 13 12.500 13S8 9 3 9z" fill="#b4b4b4" stroke="#8a8886" stroke-width="0.8" /><rect x="3" y="15.5" width="4.5" height="4" fill="#f7941d" stroke="#d9760b" stroke-width="0.8"/><rect x="10.5" y="11.5" width="4.5" height="3.5" fill="#f7941d" stroke="#d9760b" stroke-width="0.8"/><rect x="18" y="14" width="5" height="5" fill="#f7941d" stroke="#d9760b" stroke-width="0.8"/><path d="M3 10C7 10 9 18 12.500 18S18 8.500 22.500 8.500V13C18 13 16 21.500 12.500 21.500S7 14 3 14z" fill="#4a9be0" stroke="#106ebe" stroke-width="0.8" /></svg>
<svg style="left:1516.65px;top:319.5px;" width="25.2" height="25.2" viewBox="0 0 24 24"><path d="M1.500 .5v22.500M.8 22.800H24" fill="none" stroke="#323130" stroke-width="1.650"/><rect x="4" y="7" width="4" height="16" fill="#fafafa" stroke="#484745" stroke-width="1.15"/><rect x="8" y="7" width="4.5" height="7.5" fill="#c8c8c8" stroke="#8a8886" stroke-width="1"/><rect x="13.5" y="1.5" width="3" height="12.5" fill="#106ebe"/><rect x="16.5" y="1.5" width="5" height="21.5" fill="#fafafa" stroke="#484745" stroke-width="1.15"/></svg>
<svg style="left:1551.3px;top:319.5px;" width="25.2" height="25.2" viewBox="0 0 24 24"><rect x="1" y="1.5" width="22" height="7" fill="#83beec" stroke="#106ebe" stroke-width="1.2"/><rect x="3.5" y="8.5" width="17" height="7" fill="#83beec" stroke="#106ebe" stroke-width="1.2"/><rect x="7" y="15.5" width="10" height="6.5" fill="#83beec" stroke="#106ebe" stroke-width="1.2"/></svg>
<svg style="left:1585.95px;top:319.5px;" width="25.2" height="25.2" viewBox="0 0 24 24"><path d="M1.500 .5v22.500M.8 22.800H24" fill="none" stroke="#323130" stroke-width="1.650"/><rect x="5.5" y="5.5" width="3.5" height="3.5" fill="#83beec" stroke="#5fa7e0" stroke-width="0.6"/><rect x="11.5" y="9.5" width="3.5" height="3.5" fill="#83beec" stroke="#5fa7e0" stroke-width="0.6"/><rect x="18" y="14.5" width="3.5" height="3.5" fill="#83beec" stroke="#5fa7e0" stroke-width="0.6"/><rect x="17.5" y="1.5" width="4" height="4" fill="#333"/><rect x="4.5" y="16.5" width="4" height="4" fill="#333"/></svg>
<svg style="left:1620.6px;top:319.5px;" width="25.2" height="25.2" viewBox="0 0 24 24"><circle cx="12" cy="12" r="11" fill="#fafafa" stroke="#3b3a39" stroke-width="1.400"/><path d="M12 12V1A11 11 0 0 1 20.200 19.400z" fill="#83beec" stroke="#106ebe" stroke-width="1.4" stroke-linejoin="round"/></svg>
<svg style="left:1655.25px;top:319.5px;" width="25.2" height="25.2" viewBox="0 0 24 24"><path d="M1 12A11 11 0 0 1 12 1v5.500A5.500 5.500 0 0 0 6.500 12z" fill="#fafafa" stroke="#8a8886" stroke-width="1.2" /><path d="M12 1A11 11 0 1 1 1 12h5.500A5.500 5.500 0 1 0 12 6.500z" fill="#83beec" stroke="#106ebe" stroke-width="1.4" /></svg>
<svg style="left:1482px;top:354.4px;" width="25.2" height="25.2" viewBox="0 0 24 24"><rect x="1" y="1" width="22" height="22" fill="#fafafa" stroke="#3b3a39" stroke-width="1.4"/><rect x="1" y="1" width="11" height="11" fill="#83beec" stroke="#106ebe" stroke-width="1.5"/><rect x="1" y="12" width="11" height="11" fill="#83beec" stroke="#106ebe" stroke-width="1.5"/><path d="M12 8h11M16.500 8v15M16.500 15H23" fill="none" stroke="#3b3a39" stroke-width="1.3" /></svg>
<svg style="left:1516.65px;top:354.4px;" width="25.2" height="25.2" viewBox="0 0 24 24"><circle cx="11.500" cy="11" r="7" fill="#fafafa" stroke="#3b3a39" stroke-width="1.300"/><path d="M8 7.500c1-2 3-3 5-2.500l-1 2.500-2.500 1.500zM14 9l3.500-.5.500 3-2 1zM8.500 13.500l4-.5 1.500 2-2 2.500-3-1.500z" fill="#2e9b43" /><path d="M11.500 1A10 10 0 1 0 19.500 17" fill="none" stroke="#3b3a39" stroke-width="1.4" /><path d="M5 23h14M12 20.500V23" fill="none" stroke="#3b3a39" stroke-width="1.4" /></svg>
<svg style="left:1551.3px;top:354.4px;" width="25.2" height="25.2" viewBox="0 0 24 24"><path d="M9.500 5l2 1 5-3.500h6.500V12H10.500l.5-2.500z" fill="#c8c8c8" stroke="#605e5c" stroke-width="1.2" /><path d="M2 12h8.500l.8 1.500-.8 3 .5 5.500-1.500-.5-1.500-2-3.500-1.500L2.500 15z" fill="#c8c8c8" stroke="#605e5c" stroke-width="1.2" /><path d="M1 2h6l1.500 2.500 1 .5 1.500 4.500-.5 3H2.500l.8-3L2 6z" fill="#83beec" stroke="#106ebe" stroke-width="1.3" /><path d="M12 13l11-1v3.500c-1.500 3-4 4.500-7.500 5l-1 .8-1.500-1-2 .7z" fill="#83beec" stroke="#106ebe" stroke-width="1.3" /></svg>
<svg style="left:1585.95px;top:354.4px;" width="25.2" height="25.2" viewBox="0 0 24 24"><path d="M9.500 5l2 1 5-3.500h6.500V12H10.500l.5-2.500z" fill="#fafafa" stroke="#605e5c" stroke-width="1.2" /><path d="M2 12h8.500l.8 1.500-.8 3 .5 5.500-1.500-.5-1.500-2-3.500-1.500L2.500 15z" fill="#fafafa" stroke="#605e5c" stroke-width="1.2" /><path d="M1 2h6l1.500 2.500 1 .5 1.500 4.500-.5 3H2.500l.8-3L2 6z" fill="#fafafa" stroke="#2b88d8" stroke-width="1.3" /><path d="M12 13l11-1v3.500c-1.500 3-4 4.500-7.500 5l-1 .8-1.500-1-2 .7z" fill="#fafafa" stroke="#2b88d8" stroke-width="1.3" /></svg>
<svg style="left:1620.6px;top:354.4px;" width="25.2" height="25.2" viewBox="0 0 24 24"><path d="M14.500 .3L13 17.500.5 22z" fill="#3a9bd0" /><path d="M14.500 .3L20.800 25.500 13 17.500z" fill="#0f73d6" /></svg>
<svg style="left:1655.25px;top:354.4px;" width="25.2" height="25.2" viewBox="0 0 24 24"><path d="M1 17.500A11 11 0 0 1 23 17.500h-5A6 6 0 0 0 6 17.500z" fill="#83beec" stroke="#106ebe" stroke-width="1.3" /><path d="M1 17.500A11 11 0 0 1 7.500 7.500l2 4.500A6 6 0 0 0 6 17.500z" fill="#fafafa" stroke="#3b3a39" stroke-width="1.3" /><path d="M11 17.500L17.500 10l-4.500 8.500z" fill="#333" stroke="#333" stroke-width="1" /></svg>
<svg style="left:1482px;top:389.3px;" width="25.2" height="25.2" viewBox="0 0 24 24"><rect x="1" y="3.5" width="22" height="17" fill="#fafafa" stroke="#3b3a39" stroke-width="1.5"/><text x="12" y="15.800" font-size="10.500" text-anchor="middle" fill="#2b88d8" font-family="Liberation Sans, sans-serif" textLength="17" lengthAdjust="spacingAndGlyphs">123</text><path d="M3.500 18h17" fill="none" stroke="#8a8886" stroke-width="1" /></svg>
<svg style="left:1516.65px;top:389.3px;" width="25.2" height="25.2" viewBox="0 0 24 24"><rect x="1" y="1" width="22" height="22" fill="#fafafa" stroke="#3b3a39" stroke-width="1.5"/><path d="M5 4v16" fill="none" stroke="#8a8886" stroke-width="1" /><rect x="7" y="5.5" width="13" height="2.8" fill="#106ebe"/><rect x="7" y="13.5" width="13" height="2.8" fill="#106ebe"/><path d="M7 10.500h6M7 18.500h6" fill="none" stroke="#8a8886" stroke-width="1" /></svg>
<svg style="left:1551.3px;top:389.3px;" width="25.2" height="25.2" viewBox="0 0 24 24"><rect x="1" y="2.5" width="22" height="18" fill="#fafafa" stroke="#3b3a39" stroke-width="1.5"/><path d="M3.500 13l4-7 4 7z" fill="#6cc36c" stroke="#2e8b2e" stroke-width="1" /><path d="M12.500 6h8l-4 7z" fill="#f26b6b" stroke="#c0272d" stroke-width="1" /><path d="M3.500 17h17" fill="none" stroke="#8a8886" stroke-width="1" /></svg>
<svg style="left:1585.95px;top:389.3px;" width="25.2" height="25.2" viewBox="0 0 24 24"><rect x="1" y="1" width="22" height="22" fill="#fafafa" stroke="#3b3a39" stroke-width="1.5"/><rect x="1.7" y="1.7" width="20.6" height="3" fill="#c8c8c8"/><rect x="4.5" y="8.5" width="4" height="4" fill="#c8c8c8" stroke="#8a8886" stroke-width="1"/><rect x="4.5" y="15" width="4" height="4" fill="#c8c8c8" stroke="#8a8886" stroke-width="1"/><rect x="11.5" y="12" width="13" height="13" fill="#fafafa"/><path d="M12 12.500h12.500l-4.800 5.700v6.300h-3v-6.300z" fill="#fafafa" stroke="#3b3a39" stroke-width="1.5" stroke-linejoin="round"/></svg>
<svg style="left:1620.6px;top:389.3px;" width="25.2" height="25.2" viewBox="0 0 24 24"><rect x="1" y="1" width="22" height="22" fill="#fafafa" stroke="#3b3a39" stroke-width="1.5"/><rect x="1.7" y="1.7" width="20.6" height="3" fill="#c8c8c8"/><path d="M1 4.500h22" fill="none" stroke="#3b3a39" stroke-width="1" /><path d="M8.500 4.500V23M15.500 4.500V23M1 10.500h22M1 16.500h22" fill="none" stroke="#8a8886" stroke-width="1.3" /></svg>
<svg style="left:1655.25px;top:389.3px;" width="25.2" height="25.2" viewBox="0 0 24 24"><rect x="1" y="1" width="22" height="22" fill="#fafafa" stroke="#3b3a39" stroke-width="1.5"/><rect x="15.5" y="4.5" width="7" height="18" fill="#83beec"/><rect x="1.5" y="16.5" width="21" height="6" fill="#83beec"/><rect x="1.7" y="1.7" width="20.6" height="3" fill="#c8c8c8"/><path d="M1 4.500h22" fill="none" stroke="#3b3a39" stroke-width="1" /><path d="M8.500 4.500V16.500M1 10.500h14.500" fill="none" stroke="#8a8886" stroke-width="1.3" /><path d="M15.500 4.500V23M8.500 16.500V23M1 16.500h22M15.500 10.500H23" fill="none" stroke="#106ebe" stroke-width="1.4" /></svg>
<svg style="left:1482px;top:424.2px;" width="25.2" height="25.2" viewBox="0 0 24 24"><text x="12" y="21" font-size="21" font-weight="700" text-anchor="middle" fill="#2b88d8" font-family="Liberation Sans, sans-serif">R</text></svg>
<svg style="left:1516.65px;top:424.2px;" width="25.2" height="25.2" viewBox="0 0 24 24"><text x="12" y="17.500" font-size="20.500" font-weight="700" text-anchor="middle" fill="#2b88d8" font-family="Liberation Sans, sans-serif" textLength="25" lengthAdjust="spacingAndGlyphs">Py</text></svg>
<svg style="left:1551.3px;top:424.2px;" width="25.2" height="25.2" viewBox="0 0 24 24"><path d="M1.500 0v23H24" fill="none" stroke="#3b3a39" stroke-width="1.4" /><path d="M1.500 4.500H16" fill="none" stroke="#106ebe" stroke-width="1.3" /><circle cx="19.500" cy="4.500" r="3" fill="#83beec" stroke="#106ebe" stroke-width="1.200"/><path d="M1.500 11H12M1.500 16.500H7.500" fill="none" stroke="#8a8886" stroke-width="1.3" /><circle cx="14" cy="11" r="2" fill="#c8c8c8" stroke="#8a8886"/><circle cx="9.500" cy="16.500" r="2" fill="#c8c8c8" stroke="#8a8886"/></svg>
<svg style="left:1585.95px;top:424.2px;" width="25.2" height="25.2" viewBox="0 0 24 24"><path d="M9.500 11.500h3M12.500 3.500v16M12.500 3.500h3M12.500 11.500h3M12.500 19.500h3" fill="none" stroke="#3b3a39" stroke-width="1.4" /><rect x="0.5" y="8.5" width="9" height="6" fill="#83beec" stroke="#106ebe" stroke-width="1.2"/><rect x="15.5" y="0.5" width="8" height="6" fill="#83beec" stroke="#106ebe" stroke-width="1.2"/><rect x="15.5" y="8.5" width="8" height="6" fill="#83beec" stroke="#106ebe" stroke-width="1.2"/><rect x="15.5" y="16.5" width="8" height="6" fill="#83beec" stroke="#106ebe" stroke-width="1.2"/></svg>
<svg style="left:1620.6px;top:424.2px;" width="25.2" height="25.2" viewBox="0 0 24 24"><path d="M1 1.500h22v15H10L4.500 22v-5.500H1z" fill="#fafafa" stroke="#106ebe" stroke-width="1.7" stroke-linejoin="miter"/></svg>
<svg style="left:1655.25px;top:424.2px;" width="25.2" height="25.2" viewBox="0 0 24 24"><path d="M3 .7h11l6 6V23H3z" fill="#fafafa" stroke="#3b3a39" stroke-width="1.4" /><path d="M14 .7v6h6" fill="none" stroke="#3b3a39" stroke-width="1.3" /><rect x="1" y="5.5" width="4.5" height="6" fill="#fff"/><circle cx="3" cy="8.500" r="2" fill="#83beec" stroke="#106ebe" stroke-width="1.200"/><path d="M8 10h8.500M7 14h7" fill="none" stroke="#2b88d8" stroke-width="1.2" /></svg>
<svg style="left:1482px;top:459.1px;" width="25.2" height="25.2" viewBox="0 0 24 24"><path d="M5 5.500H1.500c0 4 1.500 6 4.500 6.500M19 5.500h3.500c0 4-1.500 6-4.500 6.500" fill="none" stroke="#3b3a39" stroke-width="1.4" /><path d="M4.500 2.500h15v5c0 5-3 8-7.500 8s-7.500-3-7.500-8z" fill="#fafafa" stroke="#3b3a39" stroke-width="1.4" /><rect x="6.5" y="1" width="11" height="3" fill="#83beec" stroke="#106ebe" stroke-width="1.2"/><path d="M10.500 15.500L8.500 20h7l-2-4.500" fill="#fafafa" stroke="#3b3a39" stroke-width="1.3" /><path d="M6.500 23c0-2 1-3 2.500-3h6c1.500 0 2.500 1 2.500 3z" fill="#83beec" stroke="#106ebe" stroke-width="1.2" /></svg>
<svg style="left:1516.65px;top:459.1px;" width="25.2" height="25.2" viewBox="0 0 24 24"><path d="M1.500 .8H13l6.500 6.500V25h-18z" fill="#fafafa" stroke="#3b3a39" stroke-width="1.8" /><path d="M13 .8v6.500h6.500" fill="none" stroke="#3b3a39" stroke-width="1.5" /><rect x="5" y="15" width="2.8" height="7" fill="#333"/><rect x="10" y="18" width="2.8" height="4" fill="#333"/><rect x="15" y="11.5" width="2.6" height="10.5" fill="#333"/></svg>
<svg style="left:1551.3px;top:459.1px;" width="25.2" height="25.2" viewBox="0 0 24 24"><rect x="2.5" y="3.5" width="21" height="17" fill="#fafafa" stroke="#3b3a39" stroke-width="1.5"/><text x="14" y="15.800" font-size="10.500" text-anchor="middle" fill="#2b88d8" font-family="Liberation Sans, sans-serif" textLength="15" lengthAdjust="spacingAndGlyphs">123</text><path d="M5 18h16" fill="none" stroke="#8a8886" stroke-width="1" /><g transform="translate(.8 -.3) scale(.86)"><path d="M4 -1.500l8 .3-5 6 3.800 .3L-1 17l3.500-8-3.600-.2z" fill="#f9a83a" stroke="#d9760b" stroke-width="0.9" stroke-linejoin="round"/></g></svg>
<svg style="left:1585.95px;top:459.1px;" width="25.2" height="25.2" viewBox="0 0 24 24"><rect x="13.5" y="1.5" width="8" height="8" fill="#fafafa" stroke="#a19f9d" stroke-width="1.2"/><rect x="2.5" y="12" width="8" height="8" fill="#fafafa" stroke="#a19f9d" stroke-width="1.2"/><path d="M4 10V4l6.500 .1V10z" fill="#83beec" stroke="#106ebe" stroke-width="1" /><path d="M13 12.500v7" fill="none" stroke="#a19f9d" stroke-width="1.2" /><path d="M12 12.500h12.500l-4.800 5.700v6.300h-3v-6.300z" fill="#fafafa" stroke="#3b3a39" stroke-width="1.5" stroke-linejoin="round"/><g transform="translate(.8 -.3) scale(.86)"><path d="M4 -1.500l8 .3-5 6 3.800 .3L-1 17l3.500-8-3.600-.2z" fill="#f9a83a" stroke="#d9760b" stroke-width="0.9" stroke-linejoin="round"/></g></svg>
<svg style="left:1620.6px;top:459.1px;" width="25.2" height="25.2" viewBox="0 0 24 24"><path d="M10 1.500h13.500V13M2.500 14v8.500H14" fill="none" stroke="#3b3a39" stroke-width="1.5" /><text x="13" y="17" font-size="15" text-anchor="middle" fill="#2b88d8" font-family="Liberation Sans, sans-serif">A</text><path d="M12 12.500h12.500l-4.800 5.700v6.300h-3v-6.300z" fill="#fafafa" stroke="#3b3a39" stroke-width="1.5" stroke-linejoin="round"/><g transform="translate(.8 -.3) scale(.86)"><path d="M4 -1.500l8 .3-5 6 3.800 .3L-1 17l3.500-8-3.600-.2z" fill="#f9a83a" stroke="#d9760b" stroke-width="0.9" stroke-linejoin="round"/></g></svg>
<svg style="left:1655.25px;top:459.1px;" width="25.2" height="25.2" viewBox="0 0 24 24"><path d="M10 1.500h13.500V13M2.500 14v8.500H14" fill="none" stroke="#3b3a39" stroke-width="1.5" /><path d="M10 7.500h10" fill="none" stroke="#8a8886" stroke-width="1.2" /><rect x="5.5" y="13.5" width="3" height="3" fill="#fafafa" stroke="#8a8886" stroke-width="1"/><path d="M10 15h3" fill="none" stroke="#8a8886" stroke-width="1" /><path d="M12 12.500h12.500l-4.800 5.700v6.300h-3v-6.300z" fill="#fafafa" stroke="#3b3a39" stroke-width="1.5" stroke-linejoin="round"/><g transform="translate(.8 -.3) scale(.86)"><path d="M4 -1.500l8 .3-5 6 3.800 .3L-1 17l3.500-8-3.600-.2z" fill="#f9a83a" stroke="#d9760b" stroke-width="0.9" stroke-linejoin="round"/></g></svg>
<svg style="left:1482px;top:494px;" width="25.2" height="25.2" viewBox="0 0 24 24"><path d="M7 1.500h16.500v8.500l-4 1-1.500 3-3.500 1 .5 3.500-2.500 1.500 1 3H1.500V10" fill="#fafafa" stroke="#106ebe" stroke-width="1.7" /><path d="M15.500 5.500h5V8l-3.500 1-1.500 3-3.500 1-1.500 3.500L9.500 20H5v-2.500l3.500-1.500 1-4 3.500-1 1-3z" fill="#6fb1ea" /><path d="M0 1.500C0 -.8 6.500 -.8 6.500 1.500V8L3.200 12.500 0 8z" fill="#e06c00" /><circle cx="3.200" cy="3.800" r="1.500" fill="#fff"/><circle cx="20.500" cy="20.500" r="3.300" fill="#e06c00"/><circle cx="23.500" cy="14" r="1.800" fill="#e06c00"/></svg>
<svg style="left:1516.65px;top:494px;" width="25.2" height="25.2" viewBox="0 0 24 24"><path d="M8.500 1.500L1.500 11.500l7 10.500h4.500" fill="none" stroke="#a333a3" stroke-width="1.3" /><path d="M13 1.500l10 10.500-10 10.500L3.500 12z" fill="#fafafa" stroke="#8a2da5" stroke-width="1.4" /><path d="M8.500 6.500l9.500 10M17.500 6.500L8 17" fill="none" stroke="#8a2da5" stroke-width="1.3" /></svg>
<svg style="left:1551.3px;top:494px;" width="25.2" height="25.2" viewBox="0 0 24 24"><path d="M1.500 3.500h13.500l8 8.500-8 8.500H1.500l8-8.500z" fill="#fafafa" stroke="#1a7fe6" stroke-width="1.5" stroke-linejoin="round"/><path d="M15 3.500L1.500 20.500M20 8.500L9 20.500" fill="none" stroke="#1a7fe6" stroke-width="1.4" /></svg>
<svg style="left:1585.95px;top:494px;" width="25.2" height="25.2" viewBox="0 0 24 24"><circle cx="3" cy="9.200" r="1.200" fill="#252423"/><circle cx="11" cy="9.200" r="1.200" fill="#252423"/><circle cx="19" cy="9.200" r="1.200" fill="#252423"/></svg>
<span class="t" style="left:1473px;top:541px;font-size:16px;line-height:17px;color:#252423;transform-origin:0 14px;transform:scale(0.9469,0.917);">Y-axis</span>
<svg style="left:1472.5px;top:565px;" width="219" height="96.7" viewBox="0 0 219 96.7"><rect x=".6" y=".6" width="217.8" height="95.5" rx="4" fill="none" stroke="#605e5c" stroke-width="1.100" stroke-dasharray="3.200 2.600"/></svg>
<div style="left:1479.2px;top:571.2px;width:205.8px;height:39.1px;background:#faf9f8;border:1.2px solid #605e5c;border-radius:4px;"></div>
<span class="t" style="left:1487.5px;top:584px;font-size:16px;line-height:17px;color:#252423;transform-origin:0 14px;transform:scale(0.9941,0.917);">Country</span>
<svg style="left:1618.7px;top:582.85px;" width="17" height="17" viewBox="0 0 17 17"><path d="M.8 .8l15.400 15.400M16.200 .8L.8 16.200" fill="none" stroke="#252423" stroke-width="1.400"/></svg>
<div style="left:1645.7px;top:580.75px;width:1.2px;height:20.6px;background:#605e5c;"></div>
<svg style="left:1663px;top:583.05px;" width="10" height="17" viewBox="0 0 10 17"><path d="M.9 .9l7.500 7.300L.9 15.500" fill="none" stroke="#252423" stroke-width="1.400"/></svg>
<div style="left:1479.2px;top:616.7px;width:205.8px;height:38.8px;background:#fff;border:1.2px solid #605e5c;border-radius:4px;"></div>
<span class="t" style="left:1545px;top:627px;font-size:16.5px;line-height:18px;color:#252423;-webkit-text-stroke:.55px #252423;transform-origin:0 15px;transform:scale(0.9973,0.917);">+Add data</span>
<span class="t" style="left:1473px;top:676px;font-size:16px;line-height:17px;color:#252423;transform-origin:0 14px;transform:scale(0.9268,0.917);">X-axis</span>
<svg style="left:1472.5px;top:699.2px;" width="219" height="97" viewBox="0 0 219 97"><rect x=".6" y=".6" width="217.8" height="95.8" rx="4" fill="none" stroke="#605e5c" stroke-width="1.100" stroke-dasharray="3.200 2.600"/></svg>
<div style="left:1479.2px;top:705.5px;width:205.8px;height:39px;background:#faf9f8;border:1.2px solid #605e5c;border-radius:4px;"></div>
<span class="t" style="left:1487.5px;top:719px;font-size:16px;line-height:17px;color:#252423;transform-origin:0 14px;transform:scale(0.9384,0.917);">Sum of GDP (B...</span>
<svg style="left:1618.7px;top:717.1px;" width="17" height="17" viewBox="0 0 17 17"><path d="M.8 .8l15.400 15.400M16.200 .8L.8 16.200" fill="none" stroke="#252423" stroke-width="1.400"/></svg>
<div style="left:1645.7px;top:715px;width:1.2px;height:20.6px;background:#605e5c;"></div>
<svg style="left:1663px;top:717.3px;" width="10" height="17" viewBox="0 0 10 17"><path d="M.9 .9l7.500 7.300L.9 15.500" fill="none" stroke="#252423" stroke-width="1.400"/></svg>
<div style="left:1479.2px;top:751.2px;width:205.8px;height:38.3px;background:#fff;border:1.2px solid #605e5c;border-radius:4px;"></div>
<span class="t" style="left:1545px;top:761px;font-size:16.5px;line-height:18px;color:#252423;-webkit-text-stroke:.55px #252423;transform-origin:0 15px;transform:scale(0.9973,0.917);">+Add data</span>
<span class="t" style="left:1473px;top:811px;font-size:16px;line-height:17px;color:#252423;transform-origin:0 14px;transform:scale(0.9590,0.917);">Legend</span>
<svg style="left:1472.5px;top:834.5px;" width="219" height="51.7" viewBox="0 0 219 51.7"><rect x=".6" y=".6" width="217.8" height="50.5" rx="4" fill="none" stroke="#605e5c" stroke-width="1.100" stroke-dasharray="3.200 2.600"/></svg>
<div style="left:1479.2px;top:841.2px;width:205.8px;height:38px;background:#fff;border:1.2px solid #605e5c;border-radius:4px;"></div>
<span class="t" style="left:1545px;top:851px;font-size:16.5px;line-height:18px;color:#252423;-webkit-text-stroke:.55px #252423;transform-origin:0 15px;transform:scale(0.9973,0.917);">+Add data</span>
<span class="t" style="left:1473px;top:900px;font-size:16px;line-height:17px;color:#252423;transform-origin:0 14px;transform:scale(0.9898,0.917);">Small multiples</span>
<svg style="left:1472.5px;top:924.5px;" width="219" height="55.5" viewBox="0 0 219 55.5"><rect x=".6" y=".6" width="217.8" height="54.3" rx="4" fill="none" stroke="#605e5c" stroke-width="1.100" stroke-dasharray="3.200 2.600"/></svg>
<div style="left:1479.2px;top:930.7px;width:205.8px;height:38.3px;background:#fff;border:1.2px solid #605e5c;border-radius:4px;"></div>
<span class="t" style="left:1545px;top:940px;font-size:16.5px;line-height:18px;color:#252423;-webkit-text-stroke:.55px #252423;transform-origin:0 15px;transform:scale(0.9973,0.917);">+Add data</span>
<div style="left:1695px;top:215px;width:6.7px;height:719.5px;background:#8a8886;border-radius:3.4px;"></div>
</section>

<section id="data" aria-label="Data pane">
<div style="left:1702.5px;top:170px;width:215.5px;height:770px;background:#f3f2f1;"></div>
<div style="left:1702px;top:166px;width:1px;height:774px;background:#e1dfdd;"></div>
<span class="t" style="left:1715px;top:180px;font-size:20.5px;line-height:23px;color:#252423;-webkit-text-stroke:.55px #252423;transform:scaleX(0.9928);">Data</span>
<svg style="left:1886px;top:188.5px;" width="22" height="4" viewBox="0 0 22 4"><g fill="#252423"><circle cx="2" cy="2" r="1.25"/><circle cx="10.2" cy="2" r="1.25"/><circle cx="18.4" cy="2" r="1.25"/></g></svg>
<svg style="left:1915.5px;top:183.5px;" width="16" height="16" viewBox="0 0 16 16"><path d="M1 .8l7 7.200-7 7.200M8 .8l7 7.200-7 7.200" fill="none" stroke="#252423" stroke-width="1.300"/></svg>
<div style="left:1709.5px;top:226.3px;width:225.5px;height:31.6px;background:#fff;border:1.2px solid #d2d0ce;border-radius:4px;border-bottom:1.3px solid #8a8886;"></div>
<svg style="left:1724.3px;top:231.7px;" width="20" height="20" viewBox="0 0 20 20"><circle cx="8.300" cy="8.300" r="7" fill="none" stroke="#605e5c" stroke-width="1.300"/><path d="M13.200 13.200l5.800 5.800" stroke="#605e5c" stroke-width="1.300"/></svg>
<span class="t" style="left:1754.3px;top:233px;font-size:18.5px;line-height:21px;color:#605e5c;transform:scaleX(0.9245);">Search</span>
<svg style="left:1722.6px;top:278.4px;" width="10" height="16" viewBox="0 0 10 16"><path d="M.8 .8l7.400 7.200L.8 15.200" fill="none" stroke="#252423" stroke-width="1.200"/></svg>
<svg style="left:1743px;top:278.5px;" width="16" height="16" viewBox="0 0 16 16"><rect x=".8" y=".8" width="14.400" height="14.400" rx="3" fill="none" stroke="#252423" stroke-width="1.300"/><path d="M.8 5.500h14.400M.8 10.500h14.400M5.500 .8v14.400M10.500 .8v14.400" stroke="#252423" stroke-width="1.200" fill="none"/></svg>
<span class="t" style="left:1767px;top:279px;font-size:16px;line-height:17px;color:#252423;transform-origin:0 14px;transform:scale(0.9599,0.917);">Ashishdata</span>
<svg style="left:1722.6px;top:310.4px;" width="10" height="16" viewBox="0 0 10 16"><path d="M.8 .8l7.400 7.200L.8 15.200" fill="none" stroke="#252423" stroke-width="1.200"/></svg>
<svg style="left:1743px;top:310.5px;" width="16" height="16" viewBox="0 0 16 16"><rect x=".8" y=".8" width="14.400" height="14.400" rx="3" fill="none" stroke="#252423" stroke-width="1.300"/><path d="M.8 5.500h14.400M.8 10.500h14.400M5.500 .8v14.400M10.500 .8v14.400" stroke="#252423" stroke-width="1.200" fill="none"/></svg>
<span class="t" style="left:1767px;top:311px;font-size:16px;line-height:17px;color:#252423;transform-origin:0 14px;transform:scale(0.9666,0.917);">Branch details</span>
<svg style="left:1722.6px;top:342.4px;" width="10" height="16" viewBox="0 0 10 16"><path d="M.8 .8l7.400 7.200L.8 15.200" fill="none" stroke="#252423" stroke-width="1.200"/></svg>
<svg style="left:1743px;top:342px;" width="18" height="19" viewBox="0 0 18 19"><path d="M15.200 5V3.800a3 3 0 0 0-3-3H3.800a3 3 0 0 0-3 3v8.400a3 3 0 0 0 3 3H7" fill="none" stroke="#252423" stroke-width="1.300"/><path d="M.8 5.500h14M.8 10.500H7M5.500 .8v14.400M10.500 .8V6" stroke="#252423" stroke-width="1.200" fill="none"/><rect x="8.800" y="7" width="8.400" height="11" rx="1.500" fill="#f3f2f1" stroke="#252423" stroke-width="1.300"/><path d="M10.500 9.800h5" stroke="#252423" stroke-width="1.400"/><path d="M10.700 12.500h1.200M12.500 12.500h1.200M14.300 12.500h1.200M10.700 14.300h1.200M12.500 14.300h1.200M14.300 14.300h1.200M10.700 16.100h1.200M12.500 16.100h1.200M14.300 16.100h1.200" stroke="#252423" stroke-width="1.200"/></svg>
<span class="t" style="left:1767px;top:343px;font-size:16px;line-height:17px;color:#252423;transform-origin:0 14px;transform:scale(0.9617,0.917);">Calculated Table</span>
<svg style="left:1722.6px;top:374.6px;" width="10" height="16" viewBox="0 0 10 16"><path d="M.8 .8l7.400 7.200L.8 15.200" fill="none" stroke="#252423" stroke-width="1.200"/></svg>
<svg style="left:1743px;top:374.2px;" width="18" height="19" viewBox="0 0 18 19"><path d="M15.200 5V3.800a3 3 0 0 0-3-3H3.800a3 3 0 0 0-3 3v8.400a3 3 0 0 0 3 3H7" fill="none" stroke="#252423" stroke-width="1.300"/><path d="M.8 5.500h14M.8 10.500H7M5.500 .8v14.400M10.500 .8V6" stroke="#252423" stroke-width="1.200" fill="none"/><rect x="8.800" y="7" width="8.400" height="11" rx="1.500" fill="#f3f2f1" stroke="#252423" stroke-width="1.300"/><path d="M10.500 9.800h5" stroke="#252423" stroke-width="1.400"/><path d="M10.700 12.500h1.200M12.500 12.500h1.200M14.300 12.500h1.200M10.700 14.300h1.200M12.500 14.300h1.200M14.300 14.300h1.200M10.700 16.100h1.200M12.500 16.100h1.200M14.300 16.100h1.200" stroke="#252423" stroke-width="1.200"/></svg>
<span class="t" style="left:1767px;top:375px;font-size:16px;line-height:17px;color:#252423;transform-origin:0 14px;transform:scale(0.8547,0.917);">Class</span>
<svg style="left:1720.7px;top:409.3px;" width="17" height="10" viewBox="0 0 17 10"><path d="M.8 .8l7.500 7.500L15.800 .8" fill="none" stroke="#252423" stroke-width="1.200"/></svg>
<svg style="left:1743px;top:406.7px;" width="16" height="16" viewBox="0 0 16 16"><rect x=".8" y=".8" width="14.400" height="14.400" rx="3" fill="none" stroke="#252423" stroke-width="1.300"/><path d="M.8 5.500h14.400M.8 10.500h14.400M5.500 .8v14.400M10.500 .8v14.400" stroke="#252423" stroke-width="1.200" fill="none"/></svg>
<svg style="left:1750.5px;top:414px;" width="17" height="17" viewBox="0 0 17 17"><circle cx="8.300" cy="8.300" r="8" fill="#117865"/><path d="M4.800 8.500l2.500 2.500 4.500-4.700" fill="none" stroke="#fff" stroke-width="1.500"/></svg>
<span class="t" style="left:1767px;top:407px;font-size:16px;line-height:17px;color:#252423;transform-origin:0 14px;transform:scale(0.9739,0.917);">Countries</span>
<div style="left:1762.5px;top:439.4px;width:16.2px;height:16px;background:#fbfaf9;border:1.2px solid #8a8886;border-radius:2.5px;"></div>
<svg style="left:1790px;top:438.7px;" width="14" height="17" viewBox="0 0 14 17"><path d="M12.800 3.500V.8H1.200l6.300 7.700-6.300 7.700h11.600v-2.700" fill="none" stroke="#252423" stroke-width="1.300" stroke-linejoin="round"/></svg>
<span class="t" style="left:1813.9px;top:439px;font-size:16px;line-height:17px;color:#252423;transform-origin:0 14px;transform:scale(0.9533,0.917);">Area (sq km)</span>
<div style="left:1762.5px;top:471.4px;width:16.2px;height:16px;background:#117865;border-radius:2.5px;"></div>
<svg style="left:1764.5px;top:474.7px;" width="12" height="10" viewBox="0 0 12 10"><path d="M1 5l3.400 3.400L11 1.500" fill="none" stroke="#fff" stroke-width="1.600"/></svg>
<span class="t" style="left:1813.9px;top:471px;font-size:16px;line-height:17px;color:#252423;transform-origin:0 14px;transform:scale(0.9780,0.917);">Country</span>
<div style="left:1762.5px;top:503.4px;width:16.2px;height:16px;background:#117865;border-radius:2.5px;"></div>
<svg style="left:1764.5px;top:506.7px;" width="12" height="10" viewBox="0 0 12 10"><path d="M1 5l3.400 3.400L11 1.500" fill="none" stroke="#fff" stroke-width="1.600"/></svg>
<svg style="left:1790px;top:502.7px;" width="14" height="17" viewBox="0 0 14 17"><path d="M12.800 3.500V.8H1.200l6.300 7.700-6.300 7.700h11.600v-2.700" fill="none" stroke="#252423" stroke-width="1.300" stroke-linejoin="round"/></svg>
<span class="t" style="left:1813.9px;top:503px;font-size:16px;line-height:17px;color:#252423;transform-origin:0 14px;transform:scale(0.9350,0.917);">GDP (Billion U...</span>
<div style="left:1762.5px;top:535.4px;width:16.2px;height:16px;background:#fbfaf9;border:1.2px solid #8a8886;border-radius:2.5px;"></div>
<svg style="left:1790px;top:534.7px;" width="14" height="17" viewBox="0 0 14 17"><path d="M12.800 3.500V.8H1.200l6.300 7.700-6.300 7.700h11.600v-2.700" fill="none" stroke="#252423" stroke-width="1.300" stroke-linejoin="round"/></svg>
<span class="t" style="left:1813.9px;top:535px;font-size:16px;line-height:17px;color:#252423;transform-origin:0 14px;transform:scale(0.9350,0.917);">Literacy Rate (...</span>
<div style="left:1762.5px;top:567.4px;width:16.2px;height:16px;background:#fbfaf9;border:1.2px solid #8a8886;border-radius:2.5px;"></div>
<svg style="left:1790px;top:566.7px;" width="14" height="17" viewBox="0 0 14 17"><path d="M12.800 3.500V.8H1.200l6.300 7.700-6.300 7.700h11.600v-2.700" fill="none" stroke="#252423" stroke-width="1.300" stroke-linejoin="round"/></svg>
<span class="t" style="left:1813.9px;top:567px;font-size:16px;line-height:17px;color:#252423;transform-origin:0 14px;transform:scale(0.9700,0.917);">Population (M...</span>
<div style="left:1710px;top:590.7px;width:208px;height:31.8px;background:#e1dfdd;border-radius:3px 0 0 3px;"></div>
<div style="left:1710px;top:590.7px;width:5.5px;height:31.8px;background:#117865;border-radius:3px 0 0 3px;"></div>
<div style="left:1762.5px;top:599.4px;width:16.2px;height:16px;background:#fbfaf9;border:1.2px solid #8a8886;border-radius:2.5px;"></div>
<svg style="left:1789.5px;top:597.9px;" width="16.5" height="18" viewBox="0 0 16.5 18"><rect x=".8" y=".8" width="14.700" height="16.400" rx="2.500" fill="none" stroke="#252423" stroke-width="1.300"/><rect x="3.500" y="3.500" width="9.300" height="3" rx=".8" fill="none" stroke="#252423" stroke-width="1.200"/><circle cx="4.3" cy="10.2" r="1" fill="#252423"/><circle cx="8.2" cy="10.2" r="1" fill="#252423"/><circle cx="12.1" cy="10.2" r="1" fill="#252423"/><circle cx="4.3" cy="13.8" r="1" fill="#252423"/><circle cx="8.2" cy="13.8" r="1" fill="#252423"/><circle cx="12.1" cy="13.8" r="1" fill="#252423"/></svg>
<span class="t" style="left:1813.9px;top:599px;font-size:16px;line-height:17px;color:#252423;transform-origin:0 14px;transform:scale(0.9600,0.917);">Selected Coun...</span>
<div style="left:1762.5px;top:631.4px;width:16.2px;height:16px;background:#fbfaf9;border:1.2px solid #8a8886;border-radius:2.5px;"></div>
<svg style="left:1790px;top:630.7px;" width="14" height="17" viewBox="0 0 14 17"><path d="M12.800 3.500V.8H1.200l6.300 7.700-6.300 7.700h11.600v-2.700" fill="none" stroke="#252423" stroke-width="1.300" stroke-linejoin="round"/></svg>
<span class="t" style="left:1813.9px;top:631px;font-size:16px;line-height:17px;color:#252423;transform-origin:0 14px;transform:scale(0.8847,0.917);">Year</span>
<svg style="left:1722.6px;top:662.9px;" width="10" height="16" viewBox="0 0 10 16"><path d="M.8 .8l7.400 7.200L.8 15.200" fill="none" stroke="#252423" stroke-width="1.200"/></svg>
<svg style="left:1743px;top:662.5px;" width="18" height="19" viewBox="0 0 18 19"><path d="M15.200 5V3.800a3 3 0 0 0-3-3H3.800a3 3 0 0 0-3 3v8.400a3 3 0 0 0 3 3H7" fill="none" stroke="#252423" stroke-width="1.300"/><path d="M.8 5.500h14M.8 10.500H7M5.500 .8v14.400M10.500 .8V6" stroke="#252423" stroke-width="1.200" fill="none"/><rect x="8.800" y="7" width="8.400" height="11" rx="1.500" fill="#f3f2f1" stroke="#252423" stroke-width="1.300"/><path d="M10.500 9.800h5" stroke="#252423" stroke-width="1.400"/><path d="M10.700 12.500h1.200M12.500 12.500h1.200M14.300 12.500h1.200M10.700 14.300h1.200M12.500 14.300h1.200M14.300 14.300h1.200M10.700 16.100h1.200M12.500 16.100h1.200M14.300 16.100h1.200" stroke="#252423" stroke-width="1.200"/></svg>
<span class="t" style="left:1767px;top:664px;font-size:16px;line-height:17px;color:#252423;transform-origin:0 14px;transform:scale(0.9790,0.917);">Countries Average T...</span>
<svg style="left:1722.6px;top:694.9px;" width="10" height="16" viewBox="0 0 10 16"><path d="M.8 .8l7.400 7.200L.8 15.200" fill="none" stroke="#252423" stroke-width="1.200"/></svg>
<svg style="left:1743px;top:695px;" width="16" height="16" viewBox="0 0 16 16"><rect x=".8" y=".8" width="14.400" height="14.400" rx="3" fill="none" stroke="#252423" stroke-width="1.300"/><path d="M.8 5.500h14.400M.8 10.500h14.400M5.500 .8v14.400M10.500 .8v14.400" stroke="#252423" stroke-width="1.200" fill="none"/></svg>
<span class="t" style="left:1767px;top:696px;font-size:16px;line-height:17px;color:#252423;transform-origin:0 14px;transform:scale(0.9924,0.917);">Countrylist</span>
<svg style="left:1722.6px;top:726.9px;" width="10" height="16" viewBox="0 0 10 16"><path d="M.8 .8l7.400 7.200L.8 15.200" fill="none" stroke="#252423" stroke-width="1.200"/></svg>
<svg style="left:1743px;top:727px;" width="16" height="16" viewBox="0 0 16 16"><rect x=".8" y=".8" width="14.400" height="14.400" rx="3" fill="none" stroke="#252423" stroke-width="1.300"/><path d="M.8 5.500h14.400M.8 10.500h14.400M5.500 .8v14.400M10.500 .8v14.400" stroke="#252423" stroke-width="1.200" fill="none"/></svg>
<span class="t" style="left:1767px;top:728px;font-size:16px;line-height:17px;color:#252423;transform-origin:0 14px;transform:scale(0.9592,0.917);">Customers</span>
<svg style="left:1722.6px;top:758.9px;" width="10" height="16" viewBox="0 0 10 16"><path d="M.8 .8l7.400 7.200L.8 15.200" fill="none" stroke="#252423" stroke-width="1.200"/></svg>
<svg style="left:1743px;top:759px;" width="16" height="16" viewBox="0 0 16 16"><rect x=".8" y=".8" width="14.400" height="14.400" rx="3" fill="none" stroke="#252423" stroke-width="1.300"/><path d="M.8 5.500h14.400M.8 10.500h14.400M5.500 .8v14.400M10.500 .8v14.400" stroke="#252423" stroke-width="1.200" fill="none"/></svg>
<span class="t" style="left:1767px;top:760px;font-size:16px;line-height:17px;color:#252423;transform-origin:0 14px;transform:scale(0.9644,0.917);">CustomersData</span>
<svg style="left:1722.6px;top:790.9px;" width="10" height="16" viewBox="0 0 10 16"><path d="M.8 .8l7.400 7.200L.8 15.200" fill="none" stroke="#252423" stroke-width="1.200"/></svg>
<svg style="left:1743px;top:791px;" width="16" height="16" viewBox="0 0 16 16"><rect x=".8" y=".8" width="14.400" height="14.400" rx="3" fill="none" stroke="#252423" stroke-width="1.300"/><path d="M.8 5.500h14.400M.8 10.500h14.400M5.500 .8v14.400M10.500 .8v14.400" stroke="#252423" stroke-width="1.200" fill="none"/></svg>
<span class="t" style="left:1767px;top:792px;font-size:16px;line-height:17px;color:#252423;transform-origin:0 14px;transform:scale(0.9367,0.917);">Data1</span>
<svg style="left:1722.6px;top:822.9px;" width="10" height="16" viewBox="0 0 10 16"><path d="M.8 .8l7.400 7.200L.8 15.200" fill="none" stroke="#252423" stroke-width="1.200"/></svg>
<svg style="left:1743px;top:823px;" width="16" height="16" viewBox="0 0 16 16"><rect x=".8" y=".8" width="14.400" height="14.400" rx="3" fill="none" stroke="#252423" stroke-width="1.300"/><path d="M.8 5.500h14.400M.8 10.500h14.400M5.500 .8v14.400M10.500 .8v14.400" stroke="#252423" stroke-width="1.200" fill="none"/></svg>
<span class="t" style="left:1767px;top:824px;font-size:16px;line-height:17px;color:#252423;transform-origin:0 14px;transform:scale(0.9484,0.917);">Data2</span>
<svg style="left:1722.6px;top:854.9px;" width="10" height="16" viewBox="0 0 10 16"><path d="M.8 .8l7.400 7.200L.8 15.200" fill="none" stroke="#252423" stroke-width="1.200"/></svg>
<svg style="left:1743px;top:854.5px;" width="18" height="19" viewBox="0 0 18 19"><path d="M15.200 5V3.800a3 3 0 0 0-3-3H3.800a3 3 0 0 0-3 3v8.400a3 3 0 0 0 3 3H7" fill="none" stroke="#252423" stroke-width="1.300"/><path d="M.8 5.500h14M.8 10.500H7M5.500 .8v14.400M10.500 .8V6" stroke="#252423" stroke-width="1.200" fill="none"/><rect x="8.800" y="7" width="8.400" height="11" rx="1.500" fill="#f3f2f1" stroke="#252423" stroke-width="1.300"/><path d="M10.500 9.800h5" stroke="#252423" stroke-width="1.400"/><path d="M10.700 12.500h1.200M12.500 12.500h1.200M14.300 12.500h1.200M10.700 14.300h1.200M12.500 14.300h1.200M14.300 14.300h1.200M10.700 16.100h1.200M12.500 16.100h1.200M14.300 16.100h1.200" stroke="#252423" stroke-width="1.200"/></svg>
<span class="t" style="left:1767px;top:856px;font-size:16px;line-height:17px;color:#252423;transform-origin:0 14px;transform:scale(0.9000,0.917);">DATESBETWEEN Table</span>
<svg style="left:1722.6px;top:886.9px;" width="10" height="16" viewBox="0 0 10 16"><path d="M.8 .8l7.400 7.200L.8 15.200" fill="none" stroke="#252423" stroke-width="1.200"/></svg>
<svg style="left:1743px;top:886.5px;" width="18" height="19" viewBox="0 0 18 19"><path d="M15.200 5V3.800a3 3 0 0 0-3-3H3.800a3 3 0 0 0-3 3v8.400a3 3 0 0 0 3 3H7" fill="none" stroke="#252423" stroke-width="1.300"/><path d="M.8 5.500h14M.8 10.500H7M5.500 .8v14.400M10.500 .8V6" stroke="#252423" stroke-width="1.200" fill="none"/><rect x="8.800" y="7" width="8.400" height="11" rx="1.500" fill="#f3f2f1" stroke="#252423" stroke-width="1.300"/><path d="M10.500 9.800h5" stroke="#252423" stroke-width="1.400"/><path d="M10.700 12.500h1.200M12.500 12.500h1.200M14.300 12.500h1.200M10.700 14.300h1.200M12.500 14.300h1.200M14.300 14.300h1.200M10.700 16.100h1.200M12.500 16.100h1.200M14.300 16.100h1.200" stroke="#252423" stroke-width="1.200"/></svg>
<span class="t" style="left:1767px;top:888px;font-size:16px;line-height:17px;color:#252423;transform-origin:0 14px;transform:scale(0.9000,0.917);">DATESINPERIOD Table</span>
<svg style="left:1722.6px;top:918.9px;" width="10" height="16" viewBox="0 0 10 16"><path d="M.8 .8l7.400 7.200L.8 15.200" fill="none" stroke="#252423" stroke-width="1.200"/></svg>
<svg style="left:1743px;top:918.5px;" width="18" height="19" viewBox="0 0 18 19"><path d="M15.200 5V3.800a3 3 0 0 0-3-3H3.800a3 3 0 0 0-3 3v8.400a3 3 0 0 0 3 3H7" fill="none" stroke="#252423" stroke-width="1.300"/><path d="M.8 5.500h14M.8 10.500H7M5.500 .8v14.400M10.500 .8V6" stroke="#252423" stroke-width="1.200" fill="none"/><rect x="8.800" y="7" width="8.400" height="11" rx="1.500" fill="#f3f2f1" stroke="#252423" stroke-width="1.300"/><path d="M10.500 9.800h5" stroke="#252423" stroke-width="1.400"/><path d="M10.700 12.500h1.200M12.500 12.500h1.200M14.300 12.500h1.200M10.700 14.300h1.200M12.500 14.300h1.200M14.300 14.300h1.200M10.700 16.100h1.200M12.500 16.100h1.200M14.300 16.100h1.200" stroke="#252423" stroke-width="1.200"/></svg>
<span class="t" style="left:1767px;top:920px;font-size:16px;line-height:17px;color:#252423;transform-origin:0 14px;transform:scale(0.9186,0.917);">DATESMTD Table</span>
</section>

<section id="tooltip" aria-label="Conditional formatting tooltip">
<div style="left:1063.7px;top:498.7px;width:403.3px;height:85.1px;background:#fff;border-radius:3px;box-shadow:0 6px 20px rgba(0,0,0,.24),0 0 3px rgba(0,0,0,.10);"></div>
<svg style="left:1246px;top:583.3px;filter:drop-shadow(0 3px 3px rgba(0,0,0,.18));" width="36" height="15" viewBox="0 0 36 15"><path d="M3.300 0h28.900L17.750 14.100z" fill="#fff"/></svg>
<div style="left:1240px;top:575px;width:50px;height:8.8px;background:#fff;"></div>
<span class="t" style="left:1074.5px;top:513px;font-size:16px;line-height:17px;color:#000;font-weight:700;transform-origin:0 14px;transform:scale(1.0115,0.917);">Conditional formatting</span>
<span class="t" style="left:1074.5px;top:534px;font-size:16px;line-height:17px;color:#000;transform-origin:0 14px;transform:scale(1.0164,0.917);">Make this property change under different conditions</span>
<span class="t" style="left:1074.5px;top:555px;font-size:16px;line-height:17px;color:#000;transform-origin:0 14px;transform:scale(1.0099,0.917);">that you define.</span>
</section>
</div>
</body>
</html>
